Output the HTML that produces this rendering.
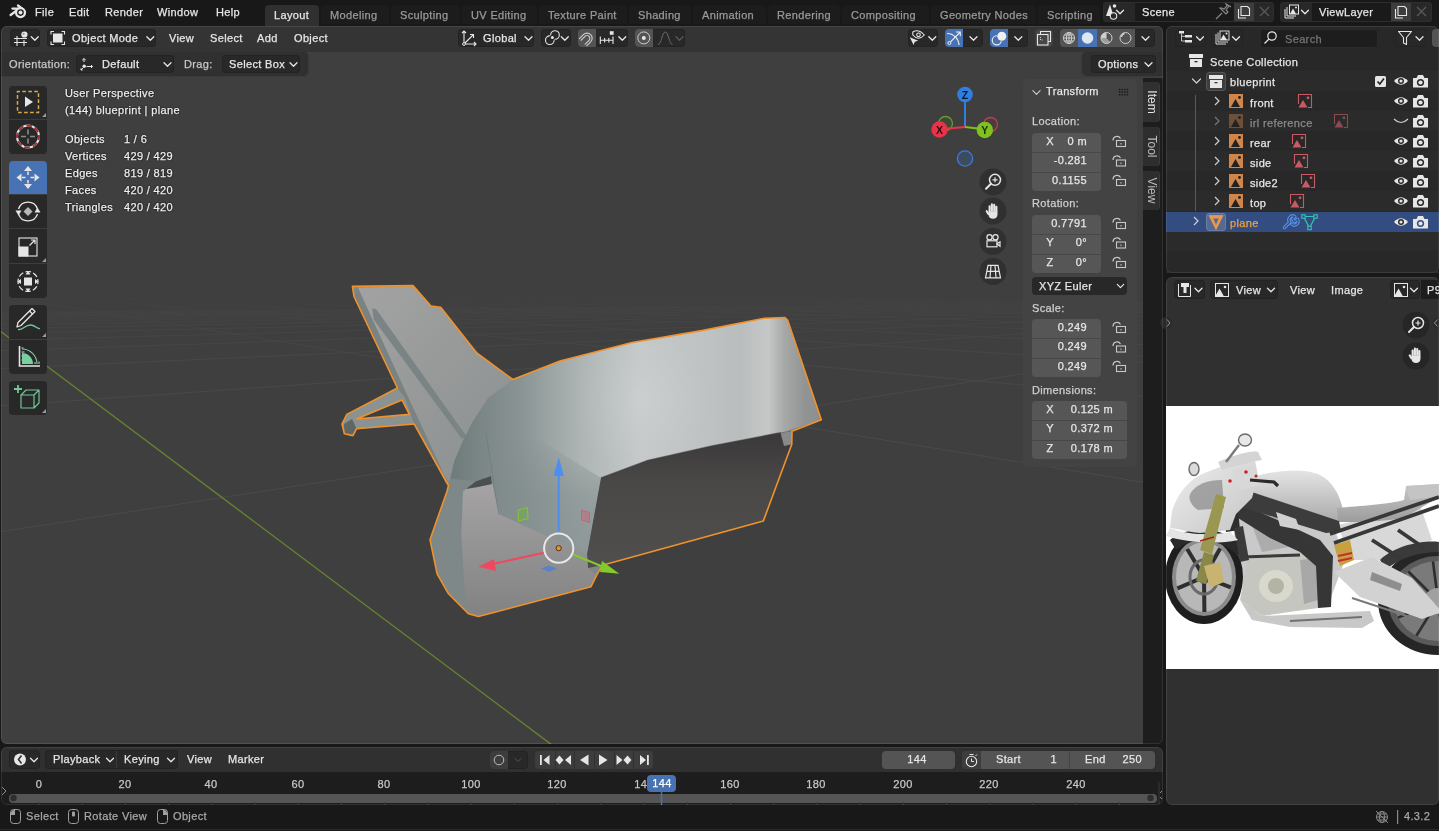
<!DOCTYPE html>
<html><head><meta charset="utf-8">
<style>
*{margin:0;padding:0;box-sizing:border-box}
html,body{width:1439px;height:831px;overflow:hidden;background:#181818;font-family:"Liberation Sans",sans-serif;font-size:12px;color:#e6e6e6;position:relative}
.a{position:absolute}
.t{position:absolute;white-space:nowrap;will-change:transform}
svg{position:absolute;overflow:visible}
</style></head><body>

<div class="a" style="left:0px;top:0px;width:1439px;height:26px;background:#181818;border-radius:0;"></div>
<svg style="left:0px;top:0px" width="32" height="24" viewBox="0 0 32 24"><g stroke="#e6e6e6" stroke-width="2.3" stroke-linecap="round" fill="none">
<path d="M12.4 8.6 L20 8.6"/><path d="M18 5.5 L22.5 9"/><path d="M10.6 15 L17 10.3"/></g>
<circle cx="20.5" cy="12.6" r="5.6" fill="#e6e6e6"/>
<circle cx="20.5" cy="12.6" r="3.3" fill="#181818"/>
<circle cx="20.5" cy="12.6" r="2" fill="#e6e6e6"/></svg>
<div class="t" style="left:35px;top:6px;color:#e6e6e6;font-size:11px;line-height:13px;letter-spacing:0.35px;-webkit-text-stroke:0.25px #e6e6e6;">File</div>
<div class="t" style="left:69px;top:6px;color:#e6e6e6;font-size:11px;line-height:13px;letter-spacing:0.35px;-webkit-text-stroke:0.25px #e6e6e6;">Edit</div>
<div class="t" style="left:105px;top:6px;color:#e6e6e6;font-size:11px;line-height:13px;letter-spacing:0.35px;-webkit-text-stroke:0.25px #e6e6e6;">Render</div>
<div class="t" style="left:157px;top:6px;color:#e6e6e6;font-size:11px;line-height:13px;letter-spacing:0.35px;-webkit-text-stroke:0.25px #e6e6e6;">Window</div>
<div class="t" style="left:216px;top:6px;color:#e6e6e6;font-size:11px;line-height:13px;letter-spacing:0.35px;-webkit-text-stroke:0.25px #e6e6e6;">Help</div>
<div class="a" style="left:265px;top:5px;width:54px;height:21px;background:#303030;border-radius:4px 4px 0 0;"></div>
<div class="t" style="left:274px;top:9px;color:#e6e6e6;font-size:11px;line-height:13px;letter-spacing:0.35px;-webkit-text-stroke:0.25px #e6e6e6;">Layout</div>
<div class="a" style="left:321px;top:5px;width:68px;height:19px;background:#1c1c1c;border-radius:4px 4px 0 0;"></div>
<div class="t" style="left:330px;top:9px;color:#9a9a9a;font-size:11px;line-height:13px;letter-spacing:0.35px;-webkit-text-stroke:0.25px #9a9a9a;">Modeling</div>
<div class="a" style="left:391px;top:5px;width:69px;height:19px;background:#1c1c1c;border-radius:4px 4px 0 0;"></div>
<div class="t" style="left:400px;top:9px;color:#9a9a9a;font-size:11px;line-height:13px;letter-spacing:0.35px;-webkit-text-stroke:0.25px #9a9a9a;">Sculpting</div>
<div class="a" style="left:462px;top:5px;width:75px;height:19px;background:#1c1c1c;border-radius:4px 4px 0 0;"></div>
<div class="t" style="left:471px;top:9px;color:#9a9a9a;font-size:11px;line-height:13px;letter-spacing:0.35px;-webkit-text-stroke:0.25px #9a9a9a;">UV Editing</div>
<div class="a" style="left:539px;top:5px;width:88px;height:19px;background:#1c1c1c;border-radius:4px 4px 0 0;"></div>
<div class="t" style="left:548px;top:9px;color:#9a9a9a;font-size:11px;line-height:13px;letter-spacing:0.35px;-webkit-text-stroke:0.25px #9a9a9a;">Texture Paint</div>
<div class="a" style="left:629px;top:5px;width:62px;height:19px;background:#1c1c1c;border-radius:4px 4px 0 0;"></div>
<div class="t" style="left:638px;top:9px;color:#9a9a9a;font-size:11px;line-height:13px;letter-spacing:0.35px;-webkit-text-stroke:0.25px #9a9a9a;">Shading</div>
<div class="a" style="left:693px;top:5px;width:73px;height:19px;background:#1c1c1c;border-radius:4px 4px 0 0;"></div>
<div class="t" style="left:702px;top:9px;color:#9a9a9a;font-size:11px;line-height:13px;letter-spacing:0.35px;-webkit-text-stroke:0.25px #9a9a9a;">Animation</div>
<div class="a" style="left:768px;top:5px;width:72px;height:19px;background:#1c1c1c;border-radius:4px 4px 0 0;"></div>
<div class="t" style="left:777px;top:9px;color:#9a9a9a;font-size:11px;line-height:13px;letter-spacing:0.35px;-webkit-text-stroke:0.25px #9a9a9a;">Rendering</div>
<div class="a" style="left:842px;top:5px;width:87px;height:19px;background:#1c1c1c;border-radius:4px 4px 0 0;"></div>
<div class="t" style="left:851px;top:9px;color:#9a9a9a;font-size:11px;line-height:13px;letter-spacing:0.35px;-webkit-text-stroke:0.25px #9a9a9a;">Compositing</div>
<div class="a" style="left:931px;top:5px;width:105px;height:19px;background:#1c1c1c;border-radius:4px 4px 0 0;"></div>
<div class="t" style="left:940px;top:9px;color:#9a9a9a;font-size:11px;line-height:13px;letter-spacing:0.35px;-webkit-text-stroke:0.25px #9a9a9a;">Geometry Nodes</div>
<div class="a" style="left:1038px;top:5px;width:62px;height:19px;background:#1c1c1c;border-radius:4px 4px 0 0;"></div>
<div class="t" style="left:1047px;top:9px;color:#9a9a9a;font-size:11px;line-height:13px;letter-spacing:0.35px;-webkit-text-stroke:0.25px #9a9a9a;">Scripting</div>
<div class="a" style="left:1px;top:26px;width:1162px;height:718px;background:#3f3f3f;border-radius:6px;box-shadow:inset 0 0 0 1px #4a4a4a22"></div>
<div class="a" style="left:1px;top:26px;width:1162px;height:26px;background:#343434;border-radius:6px 6px 0 0;"></div>
<div class="a" style="left:1px;top:52px;width:308px;height:25px;background:#303030;border-radius:0 5px 5px 0;box-shadow:inset -1px -1px 0 rgba(255,255,255,0.05)"></div>
<div class="a" style="left:1166px;top:26px;width:273px;height:247px;background:#282828;border-radius:6px;"></div>
<div class="a" style="left:1166px;top:26px;width:273px;height:25px;background:#282828;border-radius:6px 6px 0 0;"></div>
<div class="a" style="left:1166px;top:277px;width:273px;height:528px;background:#303030;border-radius:6px;"></div>
<div class="a" style="left:1166px;top:406px;width:273px;height:263px;background:#ffffff;border-radius:0;"></div>
<div class="a" style="left:1px;top:747px;width:1162px;height:58px;background:#1d1d1d;border-radius:6px;"></div>
<div class="a" style="left:1px;top:747px;width:1162px;height:25px;background:#303030;border-radius:6px 6px 0 0;"></div>
<div class="a" style="left:0px;top:805px;width:1439px;height:26px;background:#181818;border-radius:0;"></div>
<div class="a" style="left:1103px;top:2px;width:171px;height:20px;background:#282828;border-radius:4px;box-shadow:inset 0 0 0 1px #2e2e2e"></div>
<div class="a" style="left:1135px;top:3px;width:99px;height:18px;background:#1a1a1a;border-radius:0;"></div>
<div class="a" style="left:1234px;top:3px;width:20px;height:18px;background:#3d3d3d;border-radius:0;"></div>
<div class="t" style="left:1142px;top:6px;color:#e6e6e6;font-size:11px;line-height:13px;letter-spacing:0.35px;-webkit-text-stroke:0.25px #e6e6e6;">Scene</div>
<svg style="left:0px;top:0px" width="1439" height="831" viewBox="0 0 1439 831"><path d="M1116.5 10.25 L1120 13.75 L1123.5 10.25" stroke="#e6e6e6" stroke-width="1.3" fill="none" stroke-linecap="round" stroke-linejoin="round"/><path d="M1110 4.5 L1106 16 L1113.5 16 Z" fill="#e6e6e6"/><circle cx="1114.5" cy="6" r="1.8" fill="#e6e6e6"/><circle cx="1113.5" cy="16" r="3.2" fill="#282828" stroke="#e6e6e6" stroke-width="1.1"/><g stroke="#8a8a8a" stroke-width="1.1" fill="none"><path d="M1216 19 L1222 13"/><path d="M1220 8 L1226 14 L1228 12 L1226 10 L1229 6 L1231 7 L1226 4 L1227 6 L1224 9 L1222 8 Z"/></g><g stroke="#e6e6e6" stroke-width="1.1" fill="none"><path d="M1238.5 9 V18 H1246"/><path d="M1241 6.5 H1247.5 L1249.5 8.5 V15.5 H1241 Z"/></g><g stroke="#5c5c5c" stroke-width="1.1"><path d="M1260 7 L1269 16 M1269 7 L1260 16"/></g></svg>
<div class="a" style="left:1280px;top:2px;width:152px;height:20px;background:#282828;border-radius:4px;box-shadow:inset 0 0 0 1px #2e2e2e"></div>
<div class="a" style="left:1312px;top:3px;width:79px;height:18px;background:#1a1a1a;border-radius:0;"></div>
<div class="a" style="left:1391px;top:3px;width:20px;height:18px;background:#3d3d3d;border-radius:0;"></div>
<div class="t" style="left:1319px;top:6px;color:#e6e6e6;font-size:11px;line-height:13px;letter-spacing:0.35px;-webkit-text-stroke:0.25px #e6e6e6;">ViewLayer</div>
<svg style="left:0px;top:0px" width="1439" height="831" viewBox="0 0 1439 831"><path d="M1301.5 10.25 L1305 13.75 L1308.5 10.25" stroke="#e6e6e6" stroke-width="1.3" fill="none" stroke-linecap="round" stroke-linejoin="round"/><g stroke="#e6e6e6" stroke-width="1" fill="none"><path d="M1285 9 V18 H1294"/><path d="M1287 7 V16 H1296"/><rect x="1289.5" y="5" width="9" height="9"/></g><path d="M1290 14 L1293 8.5 L1296 14 Z" fill="#e6e6e6"/><circle cx="1296" cy="7.5" r="1" fill="#e6e6e6"/><g stroke="#e6e6e6" stroke-width="1.1" fill="none"><path d="M1395.5 9 V18 H1403"/><path d="M1398 6.5 H1404.5 L1406.5 8.5 V15.5 H1398 Z"/></g><g stroke="#5c5c5c" stroke-width="1.1"><path d="M1417 7 L1426 16 M1426 7 L1417 16"/></g></svg>
<div class="a" style="left:10px;top:29px;width:30px;height:18px;background:#282828;border-radius:4px;box-shadow:inset 0 0 0 1px rgba(0,0,0,0.12)"></div>
<div class="a" style="left:47px;top:29px;width:109px;height:18px;background:#282828;border-radius:4px;box-shadow:inset 0 0 0 1px rgba(0,0,0,0.12)"></div>
<div class="t" style="left:72px;top:32px;color:#e6e6e6;font-size:11px;line-height:13px;letter-spacing:0.35px;-webkit-text-stroke:0.25px #e6e6e6;">Object Mode</div>
<div class="t" style="left:169px;top:32px;color:#e6e6e6;font-size:11px;line-height:13px;letter-spacing:0.35px;-webkit-text-stroke:0.25px #e6e6e6;">View</div>
<div class="t" style="left:210px;top:32px;color:#e6e6e6;font-size:11px;line-height:13px;letter-spacing:0.35px;-webkit-text-stroke:0.25px #e6e6e6;">Select</div>
<div class="t" style="left:257px;top:32px;color:#e6e6e6;font-size:11px;line-height:13px;letter-spacing:0.35px;-webkit-text-stroke:0.25px #e6e6e6;">Add</div>
<div class="t" style="left:294px;top:32px;color:#e6e6e6;font-size:11px;line-height:13px;letter-spacing:0.35px;-webkit-text-stroke:0.25px #e6e6e6;">Object</div>
<div class="a" style="left:458px;top:29px;width:76px;height:18px;background:#282828;border-radius:4px;box-shadow:inset 0 0 0 1px rgba(0,0,0,0.12)"></div>
<div class="t" style="left:483px;top:32px;color:#e6e6e6;font-size:11px;line-height:13px;letter-spacing:0.35px;-webkit-text-stroke:0.25px #e6e6e6;">Global</div>
<div class="a" style="left:541px;top:29px;width:30px;height:18px;background:#282828;border-radius:4px;box-shadow:inset 0 0 0 1px rgba(0,0,0,0.12)"></div>
<div class="a" style="left:578px;top:29px;width:50px;height:18px;background:#282828;border-radius:4px;box-shadow:inset 0 0 0 1px rgba(0,0,0,0.12)"></div>
<div class="a" style="left:578px;top:29px;width:18px;height:18px;background:#545454;border-radius:4px 0 0 4px;"></div>
<div class="a" style="left:635px;top:29px;width:50px;height:18px;background:#282828;border-radius:4px;box-shadow:inset 0 0 0 1px rgba(0,0,0,0.12)"></div>
<div class="a" style="left:635px;top:29px;width:18px;height:18px;background:#545454;border-radius:4px 0 0 4px;"></div>
<div class="a" style="left:908px;top:29px;width:30px;height:18px;background:#282828;border-radius:4px;box-shadow:inset 0 0 0 1px rgba(0,0,0,0.12)"></div>
<div class="a" style="left:945px;top:29px;width:38px;height:18px;background:#282828;border-radius:4px;box-shadow:inset 0 0 0 1px rgba(0,0,0,0.12)"></div>
<div class="a" style="left:945px;top:29px;width:18px;height:18px;background:#4772b3;border-radius:4px 0 0 4px;"></div>
<div class="a" style="left:990px;top:29px;width:38px;height:18px;background:#282828;border-radius:4px;box-shadow:inset 0 0 0 1px rgba(0,0,0,0.12)"></div>
<div class="a" style="left:990px;top:29px;width:18px;height:18px;background:#4772b3;border-radius:4px 0 0 4px;"></div>
<div class="a" style="left:1035px;top:29px;width:18px;height:18px;background:#474747;border-radius:4px;box-shadow:inset 0 0 0 1px rgba(0,0,0,0.12)"></div>
<div class="a" style="left:1060px;top:29px;width:95px;height:18px;background:#282828;border-radius:4px;box-shadow:inset 0 0 0 1px rgba(0,0,0,0.12)"></div>
<div class="a" style="left:1060px;top:29px;width:18px;height:18px;background:#545454;border-radius:4px 0 0 4px;"></div>
<div class="a" style="left:1078px;top:29px;width:19px;height:18px;background:#4772b3;border-radius:0;"></div>
<div class="a" style="left:1097px;top:29px;width:19px;height:18px;background:#545454;border-radius:0;"></div>
<div class="a" style="left:1116px;top:29px;width:19px;height:18px;background:#545454;border-radius:0;"></div>
<div class="t" style="left:9px;top:58px;color:#c8c8c8;font-size:11px;line-height:13px;letter-spacing:0.35px;-webkit-text-stroke:0.25px #c8c8c8;">Orientation:</div>
<div class="a" style="left:76px;top:55px;width:98px;height:18px;background:#282828;border-radius:4px;box-shadow:inset 0 0 0 1px rgba(0,0,0,0.12)"></div>
<div class="t" style="left:102px;top:58px;color:#e6e6e6;font-size:11px;line-height:13px;letter-spacing:0.35px;-webkit-text-stroke:0.25px #e6e6e6;">Default</div>
<div class="t" style="left:184px;top:58px;color:#c8c8c8;font-size:11px;line-height:13px;letter-spacing:0.35px;-webkit-text-stroke:0.25px #c8c8c8;">Drag:</div>
<div class="a" style="left:222px;top:55px;width:78px;height:18px;background:#282828;border-radius:4px;box-shadow:inset 0 0 0 1px rgba(0,0,0,0.12)"></div>
<div class="t" style="left:229px;top:58px;color:#e6e6e6;font-size:11px;line-height:13px;letter-spacing:0.35px;-webkit-text-stroke:0.25px #e6e6e6;">Select Box</div>
<div class="a" style="left:1081px;top:52px;width:82px;height:25px;background:#303030;border-radius:5px 0 0 5px;box-shadow:inset 1px -1px 0 rgba(255,255,255,0.05)"></div>
<div class="a" style="left:1091px;top:55px;width:65px;height:18px;background:#282828;border-radius:4px;box-shadow:inset 0 0 0 1px rgba(0,0,0,0.12)"></div>
<div class="t" style="left:1098px;top:58px;color:#e6e6e6;font-size:11px;line-height:13px;letter-spacing:0.35px;-webkit-text-stroke:0.25px #e6e6e6;">Options</div>
<svg style="left:0px;top:0px" width="1439" height="831" viewBox="0 0 1439 831"><g stroke="#e6e6e6" stroke-width="1.1" fill="none"><path d="M14 38.5 H27 M14 42.5 H27 M17 36 V46 M24 40 V46"/></g><circle cx="24.4" cy="34.5" r="3.1" fill="#e6e6e6"/><circle cx="23.6" cy="33.8" r="1.1" fill="#9a9a9a"/><path d="M31.299999999999997 36.75 L34.8 40.25 L38.3 36.75" stroke="#e6e6e6" stroke-width="1.3" fill="none" stroke-linecap="round" stroke-linejoin="round"/><g stroke="#e6e6e6" stroke-width="1.1" fill="none"><path d="M51 34.5 V31.5 H54 M61.5 31.5 H64.5 V34.5 M64.5 41.5 V44.5 H61.5 M54 44.5 H51 V41.5"/></g><rect x="53" y="33.5" width="9.5" height="9" fill="#e6e6e6"/><path d="M146.8 36.75 L150.3 40.25 L153.8 36.75" stroke="#e6e6e6" stroke-width="1.3" fill="none" stroke-linecap="round" stroke-linejoin="round"/><g stroke="#e6e6e6" stroke-width="1.1" fill="none"><path d="M464 31 V44 H476 M462 33 L464 31 L466 33 M474 42 L476 44 L474 46 M464 44 L473.5 34.5 M470 34.5 H473.5 V38"/></g><circle cx="464" cy="44" r="1.4" fill="#282828" stroke="#e6e6e6" stroke-width="1"/><path d="M525.0 36.75 L528.5 40.25 L532.0 36.75" stroke="#e6e6e6" stroke-width="1.3" fill="none" stroke-linecap="round" stroke-linejoin="round"/><g stroke="#e6e6e6" stroke-width="1.1" fill="none"><circle cx="549.8" cy="40.2" r="4.3"/><circle cx="555" cy="35" r="4.3"/></g><circle cx="552.4" cy="37.6" r="2.8" fill="#282828"/><circle cx="552.4" cy="37.6" r="1.5" fill="#e6e6e6"/><path d="M561.3 36.75 L564.8 40.25 L568.3 36.75" stroke="#e6e6e6" stroke-width="1.3" fill="none" stroke-linecap="round" stroke-linejoin="round"/><g transform="translate(587 38.3) rotate(45)"><path d="M-4 6 V0 A4 4 0 0 1 4 0 V6" stroke="#cfcfcf" stroke-width="3.4" fill="none"/><path d="M-4 6.5 V0 A4 4 0 0 1 4 0 V6.5" stroke="#545454" stroke-width="1.2" fill="none"/></g><g stroke="#e6e6e6" stroke-width="1.1" fill="none"><path d="M600 40.2 H613 M600.3 36.5 V44 M604.6 38 V42.5 M608.8 38 V42.5 M613 36.5 V44"/></g><rect x="609.8" y="31.2" width="3.8" height="3.6" fill="#e6e6e6"/><path d="M618.8 36.75 L622.3 40.25 L625.8 36.75" stroke="#e6e6e6" stroke-width="1.3" fill="none" stroke-linecap="round" stroke-linejoin="round"/><circle cx="643.8" cy="37.9" r="6" fill="none" stroke="#cfcfcf" stroke-width="1"/><circle cx="643.8" cy="37.9" r="2" fill="#e6e6e6"/><path d="M657.9 44.5 C661.5 44.5 662 32 665.3 32 C668.6 32 669 44.5 672.5 44.5" stroke="#6a6a6a" stroke-width="1" fill="none"/><path d="M676.0 36.75 L679.5 40.25 L683.0 36.75" stroke="#5a5a5a" stroke-width="1.3" fill="none" stroke-linecap="round" stroke-linejoin="round"/><path d="M912.8 32 Q918.5 28.5 924.3 35 Q918.5 41.5 912.8 35 Z" fill="none" stroke="#e6e6e6" stroke-width="1.1"/><circle cx="918.5" cy="34.8" r="1.8" fill="none" stroke="#e6e6e6" stroke-width="1.1"/><path d="M909.8 37.2 L918.2 40.8 L914.8 41.8 L913.6 45 Z" fill="#e6e6e6"/><path d="M928.8 36.75 L932.3 40.25 L935.8 36.75" stroke="#e6e6e6" stroke-width="1.3" fill="none" stroke-linecap="round" stroke-linejoin="round"/><path d="M947 33.5 A12 12 0 0 1 959 45" stroke="#f0f0f0" stroke-width="1.1" fill="none"/><circle cx="949.4" cy="43" r="1.5" fill="none" stroke="#f0f0f0" stroke-width="1"/><path d="M950.5 41.8 L960.3 32 M956 32 H960.3 V36.3" stroke="#f0f0f0" stroke-width="1.1" fill="none"/><path d="M970.0 36.75 L973.5 40.25 L977.0 36.75" stroke="#e6e6e6" stroke-width="1.3" fill="none" stroke-linecap="round" stroke-linejoin="round"/><circle cx="996.8" cy="40.3" r="4.6" fill="none" stroke="#f0f0f0" stroke-width="1.1"/><circle cx="1001.8" cy="36.3" r="5" fill="#4772b3"/><circle cx="1001.8" cy="36.3" r="4.5" fill="#f0f0f0"/><path d="M1014.8 36.75 L1018.3 40.25 L1021.8 36.75" stroke="#e6e6e6" stroke-width="1.3" fill="none" stroke-linecap="round" stroke-linejoin="round"/><g stroke="#e6e6e6" stroke-width="1.1" fill="none"><path d="M1040.5 34 V31.5 H1050.5 V41.5 H1048"/><rect x="1037.5" y="34.5" width="10.5" height="10.5"/></g><path d="M1040.5 37 V40 H1043.5" stroke="#e6e6e6" stroke-width="0.9" stroke-dasharray="1 1" fill="none"/><g stroke="#cfcfcf" stroke-width="1" fill="none"><circle cx="1069" cy="38" r="5.5"/><path d="M1063.5 38 H1074.5 M1064.5 35 H1073.5 M1064.5 41 H1073.5 M1069 32.5 V43.5"/><ellipse cx="1069" cy="38" rx="2.6" ry="5.5"/></g><circle cx="1087.5" cy="38" r="5.8" fill="#dde6f5"/><circle cx="1106.5" cy="38" r="5.5" fill="none" stroke="#cfcfcf" stroke-width="1"/><path d="M1106.5 38 V32.5 A5.5 5.5 0 0 0 1101 38 Z" fill="#cfcfcf"/><path d="M1106.5 38 L1110.2 42 A5.5 5.5 0 0 1 1101 38 Z" fill="#cfcfcf" opacity="0.6"/><circle cx="1125.5" cy="38" r="5.5" fill="none" stroke="#cfcfcf" stroke-width="1"/><path d="M1121.5 37 A4 4 0 0 1 1124.5 33.5" stroke="#cfcfcf" stroke-width="1.3" fill="none"/><path d="M1142.0 36.75 L1145.5 40.25 L1149.0 36.75" stroke="#e6e6e6" stroke-width="1.3" fill="none" stroke-linecap="round" stroke-linejoin="round"/><g stroke="#e6e6e6" stroke-width="1" fill="none"><path d="M84 58.5 V62 M82.3 60.2 L84 58.5 L85.7 60.2 M86.5 66.5 H92.5 M91 65 L92.5 66.5 L91 68 M83 68 L81 70 M81 68.3 V70 H82.7"/></g><circle cx="84.2" cy="66.3" r="1.7" fill="#e6e6e6"/><path d="M164.0 62.75 L167.5 66.25 L171.0 62.75" stroke="#e6e6e6" stroke-width="1.3" fill="none" stroke-linecap="round" stroke-linejoin="round"/><path d="M290.0 62.75 L293.5 66.25 L297.0 62.75" stroke="#e6e6e6" stroke-width="1.3" fill="none" stroke-linecap="round" stroke-linejoin="round"/><path d="M1145.0 62.75 L1148.5 66.25 L1152.0 62.75" stroke="#e6e6e6" stroke-width="1.3" fill="none" stroke-linecap="round" stroke-linejoin="round"/></svg>
<svg style="left:0px;top:0px" width="1439" height="831" viewBox="0 0 1439 831"><defs><clipPath id="vpclip"><rect x="1" y="51" width="1142" height="693"/></clipPath><linearGradient id="gridfade" x1="0" y1="0" x2="0" y2="1"><stop offset="0" stop-color="#fff" stop-opacity="0"/><stop offset="0.04" stop-color="#fff" stop-opacity="0.3"/><stop offset="0.16" stop-color="#fff" stop-opacity="0.85"/><stop offset="0.3" stop-color="#fff" stop-opacity="1"/></linearGradient><mask id="gm" maskUnits="userSpaceOnUse" x="0" y="250" width="1160" height="500"><rect x="0" y="288" width="1160" height="462" fill="url(#gridfade)"/></mask></defs><g clip-path="url(#vpclip)"><g mask="url(#gm)" stroke="#4a4a4a" stroke-width="1"><line x1="1500" y1="300" x2="-10" y2="533.4"/><line x1="1500" y1="300" x2="-10" y2="406.6"/><line x1="1500" y1="300" x2="-10" y2="369.0"/><line x1="1500" y1="300" x2="-10" y2="351.1"/><line x1="1500" y1="300" x2="-10" y2="340.5"/><line x1="1500" y1="300" x2="-10" y2="333.6"/><line x1="1500" y1="300" x2="-10" y2="328.7"/><line x1="1500" y1="300" x2="-10" y2="325.0"/><line x1="1500" y1="300" x2="-10" y2="322.2"/><line x1="1500" y1="300" x2="-10" y2="319.9"/><line x1="1500" y1="300" x2="-10" y2="318.1"/><line x1="1500" y1="300" x2="-10" y2="316.6"/><line x1="1500" y1="300" x2="-10" y2="315.3"/><line x1="1500" y1="300" x2="-10" y2="314.2"/><line x1="1500" y1="300" x2="-10" y2="313.2"/><line x1="1500" y1="300" x2="-10" y2="312.4"/><line x1="-60" y1="286" x2="1200" y2="491.5"/><line x1="-60" y1="286" x2="1200" y2="401.3"/><line x1="-60" y1="286" x2="1200" y2="366.1"/><line x1="-60" y1="286" x2="1200" y2="347.4"/><line x1="-60" y1="286" x2="1200" y2="335.7"/><line x1="-60" y1="286" x2="1200" y2="327.8"/><line x1="-60" y1="286" x2="1200" y2="322.1"/><line x1="-60" y1="286" x2="1200" y2="317.7"/><line x1="-60" y1="286" x2="1200" y2="314.3"/><line x1="-60" y1="286" x2="1200" y2="311.5"/><line x1="-60" y1="286" x2="1200" y2="309.3"/><line x1="-60" y1="286" x2="1200" y2="307.4"/><line x1="-60" y1="286" x2="1200" y2="305.8"/><line x1="-60" y1="286" x2="1200" y2="304.4"/><line x1="-60" y1="286" x2="1200" y2="303.2"/></g><line x1="-60" y1="286" x2="600" y2="781" stroke="#66892e" stroke-width="1.3"/></g></svg>
<svg style="left:0px;top:0px" width="1439" height="831" viewBox="0 0 1439 831"><defs><linearGradient id="tubeg" x1="450" y1="0" x2="822" y2="0" gradientUnits="userSpaceOnUse"><stop offset="0" stop-color="#6f7a7a"/><stop offset="0.19" stop-color="#8a9494"/><stop offset="0.35" stop-color="#aeb4b4"/><stop offset="0.51" stop-color="#c4c8c8"/><stop offset="0.67" stop-color="#c0c3c3"/><stop offset="0.78" stop-color="#babdbd"/><stop offset="0.855" stop-color="#c6c8c8"/><stop offset="0.9" stop-color="#a6a8a8"/><stop offset="0.955" stop-color="#929494"/><stop offset="1" stop-color="#8c8e8e"/></linearGradient><linearGradient id="colg2" x1="0" y1="430" x2="0" y2="560" gradientUnits="userSpaceOnUse"><stop offset="0" stop-color="#7f8a8a" stop-opacity="0"/><stop offset="0.5" stop-color="#7f8a8a" stop-opacity="0.55"/><stop offset="1" stop-color="#859090" stop-opacity="0.8"/></linearGradient><linearGradient id="colg" x1="450" y1="0" x2="605" y2="0" gradientUnits="userSpaceOnUse"><stop offset="0" stop-color="#6f7a7a"/><stop offset="0.4" stop-color="#7f8a8a"/><stop offset="1" stop-color="#929a9a"/></linearGradient><linearGradient id="boxg" x1="0" y1="440" x2="0" y2="560" gradientUnits="userSpaceOnUse"><stop offset="0" stop-color="#3c3a3a"/><stop offset="0.35" stop-color="#4a4747"/><stop offset="1" stop-color="#504d4d"/></linearGradient><radialGradient id="hil" cx="640" cy="400" r="70" gradientUnits="userSpaceOnUse"><stop offset="0" stop-color="#ffffff" stop-opacity="0.12"/><stop offset="1" stop-color="#ffffff" stop-opacity="0"/></radialGradient><linearGradient id="floorg" x1="0" y1="480" x2="0" y2="617" gradientUnits="userSpaceOnUse"><stop offset="0" stop-color="#a6a4a4"/><stop offset="1" stop-color="#828282"/></linearGradient><linearGradient id="fing" x1="360" y1="290" x2="510" y2="440" gradientUnits="userSpaceOnUse"><stop offset="0" stop-color="#a2a2a2"/><stop offset="1" stop-color="#8e9292"/></linearGradient></defs><path d="M352.4,286.4 413.0,285.6 431.0,306.0 440.7,307.3 476.8,353.0 512.9,379.5 560.0,361.0 632.0,342.5 703.0,330.4 764.5,318.2 784.9,317.5 787.8,320.4 821.3,419.7 792.0,431.3 791.8,444.2 763.3,521.1 602.3,565.3 596.6,575.3 591.0,586.7 478.4,616.6 468.4,613.7 448.5,593.8 437.1,573.8 430.0,539.7 447.0,491.2 448.5,485.5 414.2,424.0 356.5,428.8 352.9,435.6 344.4,433.7 342.0,424.0 346.8,414.4 397.4,388.0 354.0,296.5 Z M356.5,419.0 402.0,400.0 409.4,414.4 Z" fill="#7e8888" fill-rule="evenodd"/><polygon points="358.0,287.5 413.0,286.5 431.0,306.5 440.7,308.0 476.8,353.5 512.9,380.0 488.4,398.0 473.2,420.7 463.0,441.0 455.0,460.0 449.0,482.0 440.0,468.0" fill="url(#fing)"/><polygon points="354.0,296.5 357.5,288.0 442.0,470.0 447.5,486.0 414.2,424.0 397.4,388.0" fill="#7a8282"/><polygon points="372.0,308.5 376.0,309.0 467.0,437.0 462.0,439.0 374.0,320.0" fill="#7b8484"/><path d="M397.4,388.0 346.8,414.4 342.0,424.0 344.4,433.7 352.9,435.6 356.5,428.8 414.2,424.0 405.0,398.0 Z M356.5,419.0 402.0,400.0 409.4,414.4 Z" fill="#8a9292" fill-rule="evenodd"/><polygon points="344.0,424.0 352.0,419.0 356.5,428.8 352.9,435.6 344.4,433.7" fill="#5e6666"/><polygon points="512.9,379.5 560.0,361.0 632.0,342.5 703.0,330.4 764.5,318.2 784.9,317.5 787.8,320.4 821.3,419.7 780.5,432.8 712.0,446.0 647.7,460.5 601.0,478.0 587.0,554.5 498.5,514.0 491.0,476.0 475.8,481.3 450.5,478.8 454.3,461.0 463.0,441.0 473.2,420.7 488.4,398.0" fill="url(#tubeg)"/><polygon points="512.9,379.5 560.0,361.0 632.0,342.5 703.0,330.4 764.5,318.2 784.9,317.5 787.8,320.4 821.3,419.7 780.5,432.8 712.0,446.0 647.7,460.5 601.0,478.0 587.0,554.5 498.5,514.0 491.0,476.0 475.8,481.3 450.5,478.8 454.3,461.0 463.0,441.0 473.2,420.7 488.4,398.0" fill="url(#hil)"/><polygon points="485.9,433.3 540.0,440.0 601.0,478.0 587.0,554.5 498.5,514.0" fill="url(#colg2)"/><path d="M486 433 L498.5 514" stroke="#6a7474" stroke-width="1" opacity="0.5"/><polygon points="601.0,478.0 647.7,460.5 712.0,446.0 780.5,432.8 792.0,431.3 791.8,444.2 763.3,521.1 602.3,565.3 588.0,568.0 587.0,554.5" fill="url(#boxg)"/><polygon points="780.5,432.8 792.0,431.3 791.8,444.2 784.0,446.0" fill="#8a8a8a"/><path d="M601 478 L647.7 460.5 L712 446 L780.5 432.8" stroke="#3a3a3a" stroke-width="1.5" fill="none" opacity="0.6"/><polygon points="463.0,491.4 475.8,481.3 491.0,476.0 498.5,514.0 587.0,554.5 588.0,568.0 596.6,575.3 591.0,586.7 478.4,616.6 465.6,605.0 461.3,534.0" fill="url(#floorg)"/><polygon points="466.0,489.0 475.8,481.3 491.0,476.0 492.0,484.0 478.0,487.0" fill="#4a4f4f"/><path d="M352.4,286.4 413.0,285.6 431.0,306.0 440.7,307.3 476.8,353.0 512.9,379.5 560.0,361.0 632.0,342.5 703.0,330.4 764.5,318.2 784.9,317.5 787.8,320.4 821.3,419.7 792.0,431.3 791.8,444.2 763.3,521.1 602.3,565.3 596.6,575.3 591.0,586.7 478.4,616.6 468.4,613.7 448.5,593.8 437.1,573.8 430.0,539.7 447.0,491.2 448.5,485.5 414.2,424.0 356.5,428.8 352.9,435.6 344.4,433.7 342.0,424.0 346.8,414.4 397.4,388.0 354.0,296.5 Z M356.5,419.0 402.0,400.0 409.4,414.4 Z" fill="none" stroke="#f0922c" stroke-width="1.6" stroke-linejoin="round"/><line x1="558.7" y1="532" x2="558.7" y2="470" stroke="#4d8ff0" stroke-width="2"/><path d="M553.5 476 L558.7 457 L563.9 476 Z" fill="#4d8ff0"/><line x1="545" y1="552.5" x2="488" y2="565" stroke="#f0485e" stroke-width="2"/><path d="M478.4 566.7 L494 559 L496 571 Z" fill="#f0485e"/><line x1="572" y1="554" x2="606" y2="568" stroke="#82c92a" stroke-width="2"/><path d="M602 561 L619.4 573.8 L600 572 Z" fill="#82c92a"/><polygon points="518,510 527.5,507.5 528,518.5 518.5,521" fill="#70b43a" fill-opacity="0.45" stroke="#82c92a" stroke-width="1"/><polygon points="581.5,510 589.5,512.5 589.5,522.5 581.5,520" fill="#e0506a" fill-opacity="0.35" stroke="#e0506a" stroke-width="1" stroke-opacity="0.7"/><polygon points="541,568.5 549,565.5 557,568.5 549,572" fill="#4d7fd0" fill-opacity="0.8"/><circle cx="558.7" cy="548.2" r="14.6" fill="none" stroke="#e8e8e8" stroke-width="2"/><circle cx="558.7" cy="548.2" r="2.6" fill="#f0922c" stroke="#222" stroke-width="0.8"/></svg>
<div class="a" style="left:9px;top:86px;width:38px;height:68px;background:#282828;border-radius:4px;"></div>
<div class="a" style="left:9px;top:119px;width:38px;height:1px;background:#3d3d3d;border-radius:0;"></div>
<div class="a" style="left:9px;top:161px;width:38px;height:33px;background:#4772b3;border-radius:4px 4px 0 0;"></div>
<div class="a" style="left:9px;top:194px;width:38px;height:104px;background:#282828;border-radius:0 0 4px 4px;"></div>
<div class="a" style="left:9px;top:194px;width:38px;height:1px;background:#3d3d3d;border-radius:0;"></div>
<div class="a" style="left:9px;top:228px;width:38px;height:1px;background:#3d3d3d;border-radius:0;"></div>
<div class="a" style="left:9px;top:263px;width:38px;height:1px;background:#3d3d3d;border-radius:0;"></div>
<div class="a" style="left:9px;top:161px;width:38px;height:137px;background:transparent;border-radius:4px;box-shadow:0 0 0 0 transparent"></div>
<div class="a" style="left:9px;top:305px;width:38px;height:69px;background:#282828;border-radius:4px;"></div>
<div class="a" style="left:9px;top:339px;width:38px;height:1px;background:#3d3d3d;border-radius:0;"></div>
<div class="a" style="left:9px;top:381px;width:38px;height:34px;background:#282828;border-radius:4px;"></div>
<svg style="left:0px;top:0px" width="1439" height="831" viewBox="0 0 1439 831"><g transform="translate(28 102)"><rect x="-10.5" y="-10.5" width="21" height="21" fill="none" stroke="#d8a84c" stroke-width="1.5" stroke-dasharray="3.6 2.4" stroke-dashoffset="1.2"/><path d="M-3 -5.5 L-3 5 L5 0 Z" fill="#e6e6e6"/></g><path d="M46 117 L46 113 L42 117 Z" fill="#9a9a9a"/><g transform="translate(28 136.5)"><circle r="11" fill="none" stroke="#e6e6e6" stroke-width="2"/><circle r="11" fill="none" stroke="#9c2e34" stroke-width="2" stroke-dasharray="5.6 3.04" stroke-dashoffset="2"/><path d="M0 -7 V-2 M0 2 V7 M-7 0 H-2 M2 0 H7" stroke="#8a8a8a" stroke-width="1.6"/></g><g transform="translate(28 177.5)"><g fill="#e6e6e6"><path d="M0 -11.5 L-4 -6.5 H4 Z M0 11.5 L-4 6.5 H4 Z M-11.5 0 L-6.5 -4 V4 Z M11.5 0 L6.5 -4 V4 Z"/></g><path d="M0 -6 V-2.5 M0 2.5 V6 M-6 0 H-2.5 M2.5 0 H6" stroke="#e6e6e6" stroke-width="1.5"/></g><g transform="translate(28 211.5)"><path d="M-9.5 -2.5 A10 10 0 0 1 9.5 -2.5 M9.5 2.5 A10 10 0 0 1 -9.5 2.5" stroke="#e6e6e6" stroke-width="1.3" fill="none"/><path d="M-12.5 -1 H-6.5 L-9.5 4 Z M12.5 1 H6.5 L9.5 -4 Z" fill="#e6e6e6"/><path d="M0 -4.5 L4.5 0 L0 4.5 L-4.5 0 Z" fill="#b8b8b8"/></g><g transform="translate(28 247)"><rect x="-9" y="-9" width="18" height="18" fill="none" stroke="#e6e6e6" stroke-width="1.1"/><rect x="-9.5" y="-0.5" width="10" height="10" fill="#e6e6e6"/><path d="M1.5 -1.5 L7 -7 M3 -7 H7 V-3" stroke="#e6e6e6" stroke-width="1.2" fill="none"/></g><path d="M46 262 L46 258 L42 262 Z" fill="#9a9a9a"/><g transform="translate(28 281.5)"><circle r="10" fill="none" stroke="#e6e6e6" stroke-width="1.2" stroke-dasharray="5.5 2.35" stroke-dashoffset="2.8"/><rect x="-4" y="-4" width="8" height="8" fill="#e6e6e6"/><path d="M0 -10.5 L-2.5 -7 H2.5 Z M0 10.5 L-2.5 7 H2.5 Z M-10.5 0 L-7 -2.5 V2.5 Z M10.5 0 L7 -2.5 V2.5 Z" fill="#e6e6e6"/></g><g transform="translate(28 321.5)"><path d="M-11 5.5 L-10 1 L4 -13 L7 -10 L-7 4 Z" fill="none" stroke="#e6e6e6" stroke-width="1.3" stroke-linejoin="round"/><path d="M1.5 -10.5 L4.5 -7.5" stroke="#e6e6e6" stroke-width="1.3"/><path d="M-10 8 C-5 9 -3 3 3 3.5 C8 4 9 8 12 7" stroke="#74c69a" stroke-width="1.4" fill="none"/></g><path d="M46 337 L46 333 L42 337 Z" fill="#9a9a9a"/><g transform="translate(28 357)"><path d="M-8.5 -11 V9 H12" stroke="#e6e6e6" stroke-width="1.6" fill="none"/><path d="M-6.5 -9 H-4.5 M-6.5 -5 H-3.5 M-6.5 -1 H-4.5 M-6.5 3 H-3.5 M-5 7 V4.5 M-1 7 V5 M3 7 V4.5 M7 7 V5 M11 7 V4.5" stroke="#e6e6e6" stroke-width="0.9"/><path d="M-6 -4 A11 11 0 0 1 5 7 H-6 Z" fill="#78d0a0"/><path d="M-6 -8 A15 15 0 0 1 9 7" stroke="#78d0a0" stroke-width="1.1" fill="none"/></g><g transform="translate(28 398)"><path d="M-10 -13 V-5 M-14 -9 H-6" stroke="#74c69a" stroke-width="1.8"/><g stroke="#74c69a" stroke-width="1.2" fill="none" stroke-linejoin="round"><path d="M-7 -3 L-2 -8 H11 V5 L6 10 H-7 Z M-7 -3 H6 V10 M6 -3 L11 -8"/></g></g><path d="M46 413 L46 409 L42 413 Z" fill="#9a9a9a"/></svg>
<div class="t" style="left:65px;top:87px;color:#f0f0f0;font-size:11px;line-height:13px;letter-spacing:0.35px;-webkit-text-stroke:0.25px #f0f0f0;text-shadow:0 0 2px #000,0 0 1px #000">User Perspective</div>
<div class="t" style="left:65px;top:104px;color:#f0f0f0;font-size:11px;line-height:13px;letter-spacing:0.35px;-webkit-text-stroke:0.25px #f0f0f0;text-shadow:0 0 2px #000,0 0 1px #000">(144) blueprint | plane</div>
<div class="t" style="left:65px;top:133px;color:#f0f0f0;font-size:11px;line-height:13px;letter-spacing:0.35px;-webkit-text-stroke:0.25px #f0f0f0;text-shadow:0 0 2px #000,0 0 1px #000">Objects</div>
<div class="t" style="left:124px;top:133px;color:#f0f0f0;font-size:11px;line-height:13px;letter-spacing:0.35px;-webkit-text-stroke:0.25px #f0f0f0;text-shadow:0 0 2px #000,0 0 1px #000">1 / 6</div>
<div class="t" style="left:65px;top:150px;color:#f0f0f0;font-size:11px;line-height:13px;letter-spacing:0.35px;-webkit-text-stroke:0.25px #f0f0f0;text-shadow:0 0 2px #000,0 0 1px #000">Vertices</div>
<div class="t" style="left:124px;top:150px;color:#f0f0f0;font-size:11px;line-height:13px;letter-spacing:0.35px;-webkit-text-stroke:0.25px #f0f0f0;text-shadow:0 0 2px #000,0 0 1px #000">429 / 429</div>
<div class="t" style="left:65px;top:167px;color:#f0f0f0;font-size:11px;line-height:13px;letter-spacing:0.35px;-webkit-text-stroke:0.25px #f0f0f0;text-shadow:0 0 2px #000,0 0 1px #000">Edges</div>
<div class="t" style="left:124px;top:167px;color:#f0f0f0;font-size:11px;line-height:13px;letter-spacing:0.35px;-webkit-text-stroke:0.25px #f0f0f0;text-shadow:0 0 2px #000,0 0 1px #000">819 / 819</div>
<div class="t" style="left:65px;top:184px;color:#f0f0f0;font-size:11px;line-height:13px;letter-spacing:0.35px;-webkit-text-stroke:0.25px #f0f0f0;text-shadow:0 0 2px #000,0 0 1px #000">Faces</div>
<div class="t" style="left:124px;top:184px;color:#f0f0f0;font-size:11px;line-height:13px;letter-spacing:0.35px;-webkit-text-stroke:0.25px #f0f0f0;text-shadow:0 0 2px #000,0 0 1px #000">420 / 420</div>
<div class="t" style="left:65px;top:201px;color:#f0f0f0;font-size:11px;line-height:13px;letter-spacing:0.35px;-webkit-text-stroke:0.25px #f0f0f0;text-shadow:0 0 2px #000,0 0 1px #000">Triangles</div>
<div class="t" style="left:124px;top:201px;color:#f0f0f0;font-size:11px;line-height:13px;letter-spacing:0.35px;-webkit-text-stroke:0.25px #f0f0f0;text-shadow:0 0 2px #000,0 0 1px #000">420 / 420</div>
<svg style="left:0px;top:0px" width="1439" height="831" viewBox="0 0 1439 831"><circle cx="945.5" cy="123.5" r="7" fill="#404838" stroke="#6a9a2a" stroke-width="1.3"/><circle cx="990.5" cy="124.5" r="7" fill="#4a3c3e" stroke="#c0404e" stroke-width="1.3"/><line x1="965" y1="127" x2="965" y2="95" stroke="#2f7fe0" stroke-width="2"/><line x1="965" y1="127" x2="939.5" y2="129.2" stroke="#e8334a" stroke-width="2"/><line x1="965" y1="127" x2="984.2" y2="129.2" stroke="#7fc21f" stroke-width="2"/><circle cx="965" cy="158.5" r="7.6" fill="#3c4c60" stroke="#3b7ad8" stroke-width="1.4"/><circle cx="965" cy="94.5" r="7.8" fill="#2f7fe0"/><text x="965" y="98.6" font-size="10.5" font-weight="bold" text-anchor="middle" fill="#0d1a2e" font-family="Liberation Sans">Z</text><circle cx="939.5" cy="129.5" r="8.2" fill="#e8334a"/><text x="939.5" y="133.7" font-size="10.5" font-weight="bold" text-anchor="middle" fill="#2a0a10" font-family="Liberation Sans">X</text><circle cx="984.8" cy="130" r="8.2" fill="#7fc21f"/><text x="984.8" y="134.2" font-size="10.5" font-weight="bold" text-anchor="middle" fill="#1a2a05" font-family="Liberation Sans">Y</text><circle cx="993" cy="182" r="13.5" fill="#2e2e2e" fill-opacity="0.85"/><circle cx="993" cy="211" r="13.5" fill="#2e2e2e" fill-opacity="0.85"/><circle cx="993" cy="241.5" r="13.5" fill="#2e2e2e" fill-opacity="0.85"/><circle cx="993" cy="271.5" r="13.5" fill="#2e2e2e" fill-opacity="0.85"/><g transform="translate(0 0.8)"><circle cx="995" cy="179" r="5.5" fill="none" stroke="#e6e6e6" stroke-width="1.5"/><path d="M991 183 L986 188" stroke="#e6e6e6" stroke-width="2" stroke-linecap="round"/><path d="M995 176.5 V181.5 M992.5 179 H997.5" stroke="#e6e6e6" stroke-width="1.2"/></g><g transform="translate(0 0.8)"><g transform="translate(993 211)"><g stroke="#e6e6e6" stroke-width="2.1" stroke-linecap="round"><path d="M-3.4 -0.5 V-5.5 M-1.1 -1 V-7.5 M1.2 -1 V-7 M3.4 -0.5 V-5"/><path d="M-4.6 2.2 L-6.3 -0.6"/></g><path d="M-4.5 -0.5 H4.5 V2.5 C4.5 5.5 2.5 7 0 7 C-2.5 7 -4.5 5.5 -4.5 2.5 Z" fill="#e6e6e6"/></g></g><g transform="translate(0 0.8)"><g stroke="#e6e6e6" stroke-width="1.2" fill="none"><circle cx="989.5" cy="236.5" r="2.6"/><circle cx="995.5" cy="236.5" r="2.6"/><rect x="987" y="240" width="10" height="6"/><path d="M997 243 L1000 241 V245.5 Z"/></g></g><g transform="translate(0 0.8)"><g stroke="#e6e6e6" stroke-width="1.2" fill="none"><path d="M988 264.5 H998 L1000.5 277 H985.5 Z M986.6 270.5 H999.4 M991 264.5 L990 277 M995 264.5 L996 277"/></g></g></svg>
<div class="a" style="left:1023px;top:79px;width:114px;height:388px;background:#434343;border-radius:5px;"></div>
<div class="a" style="left:1143px;top:78px;width:20px;height:666px;background:#1d1d1d;border-radius:0 0 6px 0;"></div>
<div class="a" style="left:1143px;top:82px;width:17px;height:40px;background:#303030;border-radius:0 4px 4px 0;box-shadow:inset -1px 0 0 #3a3a3a"></div>
<div class="a" style="left:1143px;top:127px;width:17px;height:39px;background:#2e2e2e;border-radius:0 4px 4px 0;box-shadow:inset -1px 0 0 #3a3a3a"></div>
<div class="a" style="left:1143px;top:171px;width:17px;height:39px;background:#2e2e2e;border-radius:0 4px 4px 0;box-shadow:inset -1px 0 0 #3a3a3a"></div>
<svg style="left:0px;top:0px" width="1439" height="831" viewBox="0 0 1439 831"><text x="0" y="0" transform="translate(1147.5 102.0) rotate(90)" text-anchor="middle" font-size="12" fill="#e6e6e6" font-family="Liberation Sans">Item</text><text x="0" y="0" transform="translate(1147.5 146.5) rotate(90)" text-anchor="middle" font-size="12" fill="#bdbdbd" font-family="Liberation Sans">Tool</text><text x="0" y="0" transform="translate(1147.5 190.5) rotate(90)" text-anchor="middle" font-size="12" fill="#bdbdbd" font-family="Liberation Sans">View</text><path d="M1032.9 90.7 L1036.5 94.3 L1040.1 90.7" stroke="#cfcfcf" stroke-width="1.1" fill="none" stroke-linecap="round" stroke-linejoin="round"/><g fill="#1c1c1c"><rect x="1118.8" y="88.8" width="1.5" height="1.5"/><rect x="1118.8" y="91.4" width="1.5" height="1.5"/><rect x="1118.8" y="94.0" width="1.5" height="1.5"/><rect x="1121.4" y="88.8" width="1.5" height="1.5"/><rect x="1121.4" y="91.4" width="1.5" height="1.5"/><rect x="1121.4" y="94.0" width="1.5" height="1.5"/><rect x="1124.0" y="88.8" width="1.5" height="1.5"/><rect x="1124.0" y="91.4" width="1.5" height="1.5"/><rect x="1124.0" y="94.0" width="1.5" height="1.5"/><rect x="1126.6" y="88.8" width="1.5" height="1.5"/><rect x="1126.6" y="91.4" width="1.5" height="1.5"/><rect x="1126.6" y="94.0" width="1.5" height="1.5"/></g></svg>
<div class="t" style="left:1046px;top:85px;color:#e6e6e6;font-size:11px;line-height:13px;letter-spacing:0.35px;-webkit-text-stroke:0.25px #e6e6e6;">Transform</div>
<div class="t" style="left:1032px;top:115px;color:#d0d0d0;font-size:11px;line-height:13px;letter-spacing:0.35px;-webkit-text-stroke:0.25px #d0d0d0;">Location:</div>
<div class="a" style="left:1032px;top:133px;width:69px;height:58px;background:#565656;border-radius:4px;"></div>
<div class="t" style="left:950px;width:200px;text-align:center;top:135px;color:#e6e6e6;font-size:11px;line-height:13px;letter-spacing:0.35px;-webkit-text-stroke:0.25px #e6e6e6;">X</div>
<div class="t" style="left:887px;width:200px;text-align:right;top:135px;color:#e6e6e6;font-size:11px;line-height:13px;letter-spacing:0.35px;-webkit-text-stroke:0.25px #e6e6e6;">0 m</div>
<div class="a" style="left:1032px;top:152px;width:69px;height:1px;background:#474747;border-radius:0;"></div>
<div class="t" style="left:887px;width:200px;text-align:right;top:154px;color:#e6e6e6;font-size:11px;line-height:13px;letter-spacing:0.35px;-webkit-text-stroke:0.25px #e6e6e6;">-0.281</div>
<div class="a" style="left:1032px;top:172px;width:69px;height:1px;background:#474747;border-radius:0;"></div>
<div class="t" style="left:887px;width:200px;text-align:right;top:174px;color:#e6e6e6;font-size:11px;line-height:13px;letter-spacing:0.35px;-webkit-text-stroke:0.25px #e6e6e6;">0.1155</div>
<svg style="left:0px;top:0px" width="1439" height="831" viewBox="0 0 1439 831"><g stroke="#c8c8c8" stroke-width="1.1" fill="none"><path d="M1113 140.5 A4 4 0 0 1 1120.5 138.5"/><rect x="1116.5" y="140.5" width="9" height="6"/></g><rect x="1120.5" y="143.0" width="1" height="1.6" fill="#c8c8c8"/><g stroke="#c8c8c8" stroke-width="1.1" fill="none"><path d="M1113 160.0 A4 4 0 0 1 1120.5 158.0"/><rect x="1116.5" y="160.0" width="9" height="6"/></g><rect x="1120.5" y="162.5" width="1" height="1.6" fill="#c8c8c8"/><g stroke="#c8c8c8" stroke-width="1.1" fill="none"><path d="M1113 179.5 A4 4 0 0 1 1120.5 177.5"/><rect x="1116.5" y="179.5" width="9" height="6"/></g><rect x="1120.5" y="182.0" width="1" height="1.6" fill="#c8c8c8"/></svg>
<div class="t" style="left:1032px;top:197px;color:#d0d0d0;font-size:11px;line-height:13px;letter-spacing:0.35px;-webkit-text-stroke:0.25px #d0d0d0;">Rotation:</div>
<div class="a" style="left:1032px;top:215px;width:69px;height:58px;background:#565656;border-radius:4px;"></div>
<div class="t" style="left:887px;width:200px;text-align:right;top:217px;color:#e6e6e6;font-size:11px;line-height:13px;letter-spacing:0.35px;-webkit-text-stroke:0.25px #e6e6e6;">0.7791</div>
<div class="a" style="left:1032px;top:234px;width:69px;height:1px;background:#474747;border-radius:0;"></div>
<div class="t" style="left:950px;width:200px;text-align:center;top:236px;color:#e6e6e6;font-size:11px;line-height:13px;letter-spacing:0.35px;-webkit-text-stroke:0.25px #e6e6e6;">Y</div>
<div class="t" style="left:887px;width:200px;text-align:right;top:236px;color:#e6e6e6;font-size:11px;line-height:13px;letter-spacing:0.35px;-webkit-text-stroke:0.25px #e6e6e6;">0°</div>
<div class="a" style="left:1032px;top:254px;width:69px;height:1px;background:#474747;border-radius:0;"></div>
<div class="t" style="left:950px;width:200px;text-align:center;top:256px;color:#e6e6e6;font-size:11px;line-height:13px;letter-spacing:0.35px;-webkit-text-stroke:0.25px #e6e6e6;">Z</div>
<div class="t" style="left:887px;width:200px;text-align:right;top:256px;color:#e6e6e6;font-size:11px;line-height:13px;letter-spacing:0.35px;-webkit-text-stroke:0.25px #e6e6e6;">0°</div>
<svg style="left:0px;top:0px" width="1439" height="831" viewBox="0 0 1439 831"><g stroke="#c8c8c8" stroke-width="1.1" fill="none"><path d="M1113 222.5 A4 4 0 0 1 1120.5 220.5"/><rect x="1116.5" y="222.5" width="9" height="6"/></g><rect x="1120.5" y="225.0" width="1" height="1.6" fill="#c8c8c8"/><g stroke="#c8c8c8" stroke-width="1.1" fill="none"><path d="M1113 242.0 A4 4 0 0 1 1120.5 240.0"/><rect x="1116.5" y="242.0" width="9" height="6"/></g><rect x="1120.5" y="244.5" width="1" height="1.6" fill="#c8c8c8"/><g stroke="#c8c8c8" stroke-width="1.1" fill="none"><path d="M1113 261.5 A4 4 0 0 1 1120.5 259.5"/><rect x="1116.5" y="261.5" width="9" height="6"/></g><rect x="1120.5" y="264.0" width="1" height="1.6" fill="#c8c8c8"/></svg>
<div class="a" style="left:1032px;top:277px;width:95px;height:18px;background:#282828;border-radius:4px;"></div>
<div class="t" style="left:1039px;top:280px;color:#e6e6e6;font-size:11px;line-height:13px;letter-spacing:0.35px;-webkit-text-stroke:0.25px #e6e6e6;">XYZ Euler</div>
<svg style="left:0px;top:0px" width="1439" height="831" viewBox="0 0 1439 831"><path d="M1117.3 284.4 L1120.5 287.6 L1123.7 284.4" stroke="#e6e6e6" stroke-width="1.2" fill="none" stroke-linecap="round" stroke-linejoin="round"/></svg>
<div class="t" style="left:1032px;top:302px;color:#d0d0d0;font-size:11px;line-height:13px;letter-spacing:0.35px;-webkit-text-stroke:0.25px #d0d0d0;">Scale:</div>
<div class="a" style="left:1032px;top:319px;width:69px;height:58px;background:#565656;border-radius:4px;"></div>
<div class="t" style="left:887px;width:200px;text-align:right;top:321px;color:#e6e6e6;font-size:11px;line-height:13px;letter-spacing:0.35px;-webkit-text-stroke:0.25px #e6e6e6;">0.249</div>
<div class="a" style="left:1032px;top:338px;width:69px;height:1px;background:#474747;border-radius:0;"></div>
<div class="t" style="left:887px;width:200px;text-align:right;top:340px;color:#e6e6e6;font-size:11px;line-height:13px;letter-spacing:0.35px;-webkit-text-stroke:0.25px #e6e6e6;">0.249</div>
<div class="a" style="left:1032px;top:358px;width:69px;height:1px;background:#474747;border-radius:0;"></div>
<div class="t" style="left:887px;width:200px;text-align:right;top:360px;color:#e6e6e6;font-size:11px;line-height:13px;letter-spacing:0.35px;-webkit-text-stroke:0.25px #e6e6e6;">0.249</div>
<svg style="left:0px;top:0px" width="1439" height="831" viewBox="0 0 1439 831"><g stroke="#c8c8c8" stroke-width="1.1" fill="none"><path d="M1113 326.5 A4 4 0 0 1 1120.5 324.5"/><rect x="1116.5" y="326.5" width="9" height="6"/></g><rect x="1120.5" y="329.0" width="1" height="1.6" fill="#c8c8c8"/><g stroke="#c8c8c8" stroke-width="1.1" fill="none"><path d="M1113 346.0 A4 4 0 0 1 1120.5 344.0"/><rect x="1116.5" y="346.0" width="9" height="6"/></g><rect x="1120.5" y="348.5" width="1" height="1.6" fill="#c8c8c8"/><g stroke="#c8c8c8" stroke-width="1.1" fill="none"><path d="M1113 365.5 A4 4 0 0 1 1120.5 363.5"/><rect x="1116.5" y="365.5" width="9" height="6"/></g><rect x="1120.5" y="368.0" width="1" height="1.6" fill="#c8c8c8"/></svg>
<div class="t" style="left:1032px;top:384px;color:#d0d0d0;font-size:11px;line-height:13px;letter-spacing:0.35px;-webkit-text-stroke:0.25px #d0d0d0;">Dimensions:</div>
<div class="a" style="left:1032px;top:401px;width:95px;height:58px;background:#565656;border-radius:4px;"></div>
<div class="t" style="left:950px;width:200px;text-align:center;top:403px;color:#e6e6e6;font-size:11px;line-height:13px;letter-spacing:0.35px;-webkit-text-stroke:0.25px #e6e6e6;">X</div>
<div class="t" style="left:913px;width:200px;text-align:right;top:403px;color:#e6e6e6;font-size:11px;line-height:13px;letter-spacing:0.35px;-webkit-text-stroke:0.25px #e6e6e6;">0.125 m</div>
<div class="a" style="left:1032px;top:420px;width:95px;height:1px;background:#474747;border-radius:0;"></div>
<div class="t" style="left:950px;width:200px;text-align:center;top:422px;color:#e6e6e6;font-size:11px;line-height:13px;letter-spacing:0.35px;-webkit-text-stroke:0.25px #e6e6e6;">Y</div>
<div class="t" style="left:913px;width:200px;text-align:right;top:422px;color:#e6e6e6;font-size:11px;line-height:13px;letter-spacing:0.35px;-webkit-text-stroke:0.25px #e6e6e6;">0.372 m</div>
<div class="a" style="left:1032px;top:440px;width:95px;height:1px;background:#474747;border-radius:0;"></div>
<div class="t" style="left:950px;width:200px;text-align:center;top:442px;color:#e6e6e6;font-size:11px;line-height:13px;letter-spacing:0.35px;-webkit-text-stroke:0.25px #e6e6e6;">Z</div>
<div class="t" style="left:913px;width:200px;text-align:right;top:442px;color:#e6e6e6;font-size:11px;line-height:13px;letter-spacing:0.35px;-webkit-text-stroke:0.25px #e6e6e6;">0.178 m</div>
<div class="a" style="left:1166px;top:71px;width:273px;height:20px;background:#2b2b2b;border-radius:0;"></div>
<div class="a" style="left:1166px;top:111px;width:273px;height:20px;background:#2b2b2b;border-radius:0;"></div>
<div class="a" style="left:1166px;top:151px;width:273px;height:20px;background:#2b2b2b;border-radius:0;"></div>
<div class="a" style="left:1166px;top:191px;width:273px;height:20px;background:#2b2b2b;border-radius:0;"></div>
<div class="a" style="left:1166px;top:231px;width:273px;height:20px;background:#2b2b2b;border-radius:0;"></div>
<div class="a" style="left:1166px;top:271px;width:273px;height:2px;background:#2b2b2b;border-radius:0;"></div>
<div class="a" style="left:1166px;top:212px;width:273px;height:20px;background:#334d80;border-radius:0;"></div>
<div class="a" style="left:1166px;top:253px;width:273px;height:20px;background:#282828;border-radius:0 0 6px 6px;"></div>
<div class="a" style="left:1175px;top:29px;width:31px;height:18px;background:#282828;border-radius:4px;box-shadow:inset 0 0 0 1px rgba(0,0,0,0.12)"></div>
<div class="a" style="left:1211px;top:29px;width:32px;height:18px;background:#282828;border-radius:4px;box-shadow:inset 0 0 0 1px rgba(0,0,0,0.12)"></div>
<div class="a" style="left:1260px;top:29px;width:118px;height:19px;background:#1d1d1d;border-radius:4px;box-shadow:inset 0 0 0 1px #2a2a2a"></div>
<div class="a" style="left:1395px;top:29px;width:31px;height:18px;background:#282828;border-radius:4px;box-shadow:inset 0 0 0 1px rgba(0,0,0,0.12)"></div>
<div class="a" style="left:1432px;top:29px;width:10px;height:18px;background:#545454;border-radius:4px 0 0 4px;"></div>
<div class="t" style="left:1285px;top:33px;color:#767676;font-size:11px;line-height:13px;letter-spacing:0.35px;-webkit-text-stroke:0.25px #767676;">Search</div>
<div class="t" style="left:1210px;top:56px;color:#e6e6e6;font-size:11px;line-height:13px;letter-spacing:0.35px;-webkit-text-stroke:0.25px #e6e6e6;">Scene Collection</div>
<div class="a" style="left:1206px;top:72px;width:20px;height:19px;background:#3d3d3d;border-radius:4px;box-shadow:inset 0 0 0 1px #555"></div>
<div class="t" style="left:1230px;top:76px;color:#e6e6e6;font-size:11px;line-height:13px;letter-spacing:0.35px;-webkit-text-stroke:0.25px #e6e6e6;">blueprint</div>
<div class="t" style="left:1250px;top:97px;color:#e6e6e6;font-size:11px;line-height:13px;letter-spacing:0.35px;-webkit-text-stroke:0.25px #e6e6e6;">front</div>
<div class="t" style="left:1250px;top:117px;color:#8a8a8a;font-size:11px;line-height:13px;letter-spacing:0.35px;-webkit-text-stroke:0.25px #8a8a8a;">irl reference</div>
<div class="t" style="left:1250px;top:137px;color:#e6e6e6;font-size:11px;line-height:13px;letter-spacing:0.35px;-webkit-text-stroke:0.25px #e6e6e6;">rear</div>
<div class="t" style="left:1250px;top:157px;color:#e6e6e6;font-size:11px;line-height:13px;letter-spacing:0.35px;-webkit-text-stroke:0.25px #e6e6e6;">side</div>
<div class="t" style="left:1250px;top:177px;color:#e6e6e6;font-size:11px;line-height:13px;letter-spacing:0.35px;-webkit-text-stroke:0.25px #e6e6e6;">side2</div>
<div class="t" style="left:1250px;top:197px;color:#e6e6e6;font-size:11px;line-height:13px;letter-spacing:0.35px;-webkit-text-stroke:0.25px #e6e6e6;">top</div>
<div class="a" style="left:1206px;top:213px;width:20px;height:18px;background:#56698f;border-radius:4px;box-shadow:inset 0 0 0 1px #6a7ea5"></div>
<div class="t" style="left:1230px;top:217px;color:#f0a040;font-size:11px;line-height:13px;letter-spacing:0.35px;-webkit-text-stroke:0.25px #f0a040;">plane</div>
<svg style="left:0px;top:0px" width="1439" height="831" viewBox="0 0 1439 831"><g fill="#e6e6e6"><rect x="1179" y="31" width="5" height="2.5"/><rect x="1185" y="35" width="7" height="2.5"/><rect x="1185" y="40" width="7" height="2.5"/></g><path d="M1181.5 33.5 V41 H1185 M1181.5 36.3 H1185" stroke="#e6e6e6" stroke-width="0.8" fill="none"/><path d="M1196.5 36.75 L1200 40.25 L1203.5 36.75" stroke="#e6e6e6" stroke-width="1.3" fill="none" stroke-linecap="round" stroke-linejoin="round"/><g stroke="#e6e6e6" stroke-width="0.9" fill="none"><path d="M1216 34 V44 H1226"/><path d="M1218 32.5 V42 H1228"/><rect x="1220" y="31" width="9" height="9"/></g><path d="M1220.5 40 L1223.5 34.5 L1227 40 Z" fill="#e6e6e6"/><circle cx="1226.5" cy="33.5" r="1" fill="#e6e6e6"/><path d="M1232.5 36.75 L1236 40.25 L1239.5 36.75" stroke="#e6e6e6" stroke-width="1.3" fill="none" stroke-linecap="round" stroke-linejoin="round"/><circle cx="1272" cy="36" r="4.2" fill="none" stroke="#e6e6e6" stroke-width="1.2"/><path d="M1269 39 L1264.5 43.5" stroke="#e6e6e6" stroke-width="1.2"/><path d="M1398.5 31.5 H1411.5 L1406.5 37.5 V44.5 L1403.5 43 V37.5 Z" fill="none" stroke="#e6e6e6" stroke-width="1.1" stroke-linejoin="round"/><path d="M1416.0 36.75 L1419.5 40.25 L1423.0 36.75" stroke="#e6e6e6" stroke-width="1.3" fill="none" stroke-linecap="round" stroke-linejoin="round"/><rect x="1189" y="54" width="14" height="4" fill="#e6e6e6"/><rect x="1190" y="59" width="12" height="8" fill="#e6e6e6"/><rect x="1194.5" y="61" width="3" height="1.3" fill="#282828"/><path d="M1192.5 79.0 L1196.5 83.0 L1200.5 79.0" stroke="#cfcfcf" stroke-width="1.2" fill="none" stroke-linecap="round" stroke-linejoin="round"/><rect x="1209" y="75" width="14" height="4" fill="#e6e6e6"/><rect x="1210" y="80" width="12" height="8" fill="#e6e6e6"/><rect x="1214.5" y="82" width="3" height="1.3" fill="#3d3d3d"/><rect x="1375" y="76" width="11" height="11" rx="1.5" fill="#e6e6e6"/><path d="M1377.5 81.5 L1379.8 84 L1384 78.5" stroke="#222" stroke-width="1.6" fill="none"/><path d="M1394 81.0 Q1401 73.5 1408 81.0 Q1401 88.5 1394 81.0 Z" fill="#e6e6e6"/><circle cx="1401" cy="81.0" r="3" fill="#282828"/><circle cx="1401" cy="81.0" r="1.6" fill="#e6e6e6"/><path d="M1413 78 H1416.5 L1418 75 H1423 L1424.5 78 H1428 V87.5 H1413 Z" fill="#e6e6e6"/><circle cx="1420.5" cy="82.5" r="3.6" fill="#282828"/><circle cx="1420.5" cy="82.5" r="2.1" fill="#e6e6e6"/><path d="M1195.5 95 V211" stroke="#5a5a5a" stroke-width="1"/><path d="M1215 97 L1219 101 L1215 105" stroke="#cfcfcf" stroke-width="1.2" fill="none"/><rect x="1229" y="94" width="14" height="14" fill="#d0864a"/><path d="M1231 107 L1235.5 99 L1240 107 Z" fill="#222"/><circle cx="1239.5" cy="97.5" r="1.4" fill="#222"/><path d="M1301 94.5 H1311.5 V107.5 H1308" stroke="#c85a63" stroke-width="1.1" fill="none"/><path d="M1298.5 104 V94.5 H1301" stroke="#c85a63" stroke-width="1.1" fill="none"/><path d="M1298.5 107.5 L1303 100 L1307.5 107.5 Z" fill="#c85a63"/><circle cx="1308" cy="97.8" r="1.4" fill="#c85a63"/><path d="M1394 101.0 Q1401 93.5 1408 101.0 Q1401 108.5 1394 101.0 Z" fill="#e6e6e6"/><circle cx="1401" cy="101.0" r="3" fill="#282828"/><circle cx="1401" cy="101.0" r="1.6" fill="#e6e6e6"/><path d="M1413 98 H1416.5 L1418 95 H1423 L1424.5 98 H1428 V107.5 H1413 Z" fill="#e6e6e6"/><circle cx="1420.5" cy="102.5" r="3.6" fill="#282828"/><circle cx="1420.5" cy="102.5" r="2.1" fill="#e6e6e6"/><path d="M1215 117 L1219 121 L1215 125" stroke="#777" stroke-width="1.2" fill="none"/><rect x="1229" y="114" width="14" height="14" fill="#6e5038"/><path d="M1231 127 L1235.5 119 L1240 127 Z" fill="#222"/><circle cx="1239.5" cy="117.5" r="1.4" fill="#222"/><path d="M1337 114.5 H1347.5 V127.5 H1344" stroke="#8a4a50" stroke-width="1.1" fill="none"/><path d="M1334.5 124 V114.5 H1337" stroke="#8a4a50" stroke-width="1.1" fill="none"/><path d="M1334.5 127.5 L1339 120 L1343.5 127.5 Z" fill="#8a4a50"/><circle cx="1344" cy="117.8" r="1.4" fill="#8a4a50"/><path d="M1394 119 Q1401 126 1408 119" stroke="#cfcfcf" stroke-width="1.1" fill="none"/><path d="M1413 118 H1416.5 L1418 115 H1423 L1424.5 118 H1428 V127.5 H1413 Z" fill="#e6e6e6"/><circle cx="1420.5" cy="122.5" r="3.6" fill="#282828"/><circle cx="1420.5" cy="122.5" r="2.1" fill="#e6e6e6"/><path d="M1215 137 L1219 141 L1215 145" stroke="#cfcfcf" stroke-width="1.2" fill="none"/><rect x="1229" y="134" width="14" height="14" fill="#d0864a"/><path d="M1231 147 L1235.5 139 L1240 147 Z" fill="#222"/><circle cx="1239.5" cy="137.5" r="1.4" fill="#222"/><path d="M1295 134.5 H1305.5 V147.5 H1302" stroke="#c85a63" stroke-width="1.1" fill="none"/><path d="M1292.5 144 V134.5 H1295" stroke="#c85a63" stroke-width="1.1" fill="none"/><path d="M1292.5 147.5 L1297 140 L1301.5 147.5 Z" fill="#c85a63"/><circle cx="1302" cy="137.8" r="1.4" fill="#c85a63"/><path d="M1394 141.0 Q1401 133.5 1408 141.0 Q1401 148.5 1394 141.0 Z" fill="#e6e6e6"/><circle cx="1401" cy="141.0" r="3" fill="#282828"/><circle cx="1401" cy="141.0" r="1.6" fill="#e6e6e6"/><path d="M1413 138 H1416.5 L1418 135 H1423 L1424.5 138 H1428 V147.5 H1413 Z" fill="#e6e6e6"/><circle cx="1420.5" cy="142.5" r="3.6" fill="#282828"/><circle cx="1420.5" cy="142.5" r="2.1" fill="#e6e6e6"/><path d="M1215 157 L1219 161 L1215 165" stroke="#cfcfcf" stroke-width="1.2" fill="none"/><rect x="1229" y="154" width="14" height="14" fill="#d0864a"/><path d="M1231 167 L1235.5 159 L1240 167 Z" fill="#222"/><circle cx="1239.5" cy="157.5" r="1.4" fill="#222"/><path d="M1297 154.5 H1307.5 V167.5 H1304" stroke="#c85a63" stroke-width="1.1" fill="none"/><path d="M1294.5 164 V154.5 H1297" stroke="#c85a63" stroke-width="1.1" fill="none"/><path d="M1294.5 167.5 L1299 160 L1303.5 167.5 Z" fill="#c85a63"/><circle cx="1304" cy="157.8" r="1.4" fill="#c85a63"/><path d="M1394 161.0 Q1401 153.5 1408 161.0 Q1401 168.5 1394 161.0 Z" fill="#e6e6e6"/><circle cx="1401" cy="161.0" r="3" fill="#282828"/><circle cx="1401" cy="161.0" r="1.6" fill="#e6e6e6"/><path d="M1413 158 H1416.5 L1418 155 H1423 L1424.5 158 H1428 V167.5 H1413 Z" fill="#e6e6e6"/><circle cx="1420.5" cy="162.5" r="3.6" fill="#282828"/><circle cx="1420.5" cy="162.5" r="2.1" fill="#e6e6e6"/><path d="M1215 177 L1219 181 L1215 185" stroke="#cfcfcf" stroke-width="1.2" fill="none"/><rect x="1229" y="174" width="14" height="14" fill="#d0864a"/><path d="M1231 187 L1235.5 179 L1240 187 Z" fill="#222"/><circle cx="1239.5" cy="177.5" r="1.4" fill="#222"/><path d="M1304 174.5 H1314.5 V187.5 H1311" stroke="#c85a63" stroke-width="1.1" fill="none"/><path d="M1301.5 184 V174.5 H1304" stroke="#c85a63" stroke-width="1.1" fill="none"/><path d="M1301.5 187.5 L1306 180 L1310.5 187.5 Z" fill="#c85a63"/><circle cx="1311" cy="177.8" r="1.4" fill="#c85a63"/><path d="M1394 181.0 Q1401 173.5 1408 181.0 Q1401 188.5 1394 181.0 Z" fill="#e6e6e6"/><circle cx="1401" cy="181.0" r="3" fill="#282828"/><circle cx="1401" cy="181.0" r="1.6" fill="#e6e6e6"/><path d="M1413 178 H1416.5 L1418 175 H1423 L1424.5 178 H1428 V187.5 H1413 Z" fill="#e6e6e6"/><circle cx="1420.5" cy="182.5" r="3.6" fill="#282828"/><circle cx="1420.5" cy="182.5" r="2.1" fill="#e6e6e6"/><path d="M1215 197 L1219 201 L1215 205" stroke="#cfcfcf" stroke-width="1.2" fill="none"/><rect x="1229" y="194" width="14" height="14" fill="#d0864a"/><path d="M1231 207 L1235.5 199 L1240 207 Z" fill="#222"/><circle cx="1239.5" cy="197.5" r="1.4" fill="#222"/><path d="M1293 194.5 H1303.5 V207.5 H1300" stroke="#c85a63" stroke-width="1.1" fill="none"/><path d="M1290.5 204 V194.5 H1293" stroke="#c85a63" stroke-width="1.1" fill="none"/><path d="M1290.5 207.5 L1295 200 L1299.5 207.5 Z" fill="#c85a63"/><circle cx="1300" cy="197.8" r="1.4" fill="#c85a63"/><path d="M1394 201.0 Q1401 193.5 1408 201.0 Q1401 208.5 1394 201.0 Z" fill="#e6e6e6"/><circle cx="1401" cy="201.0" r="3" fill="#282828"/><circle cx="1401" cy="201.0" r="1.6" fill="#e6e6e6"/><path d="M1413 198 H1416.5 L1418 195 H1423 L1424.5 198 H1428 V207.5 H1413 Z" fill="#e6e6e6"/><circle cx="1420.5" cy="202.5" r="3.6" fill="#282828"/><circle cx="1420.5" cy="202.5" r="2.1" fill="#e6e6e6"/><path d="M1194 217 L1198 221 L1194 225" stroke="#cfcfcf" stroke-width="1.2" fill="none"/><path d="M1209 215.5 H1223 L1216 229.5 Z" fill="#e89850" stroke="#e89850" stroke-width="0.8" stroke-linejoin="round"/><path d="M1213.3 218.6 H1218.7 L1216 224.4 Z" fill="#56698f"/><path d="M1284.5 227.5 L1289.8 222.2 M1289.8 222.2 A3.8 3.8 0 0 1 1294.8 216.6 L1292.6 218.8 L1293.4 220.6 L1295.2 221.4 L1297.4 219.2 A3.8 3.8 0 0 1 1291.8 224.2" stroke="#5a8fe6" stroke-width="3.4" fill="none" stroke-linecap="round" stroke-linejoin="round"/><path d="M1284.5 227.5 L1289.8 222.2 M1289.8 222.2 A3.8 3.8 0 0 1 1294.8 216.6 L1292.6 218.8 L1293.4 220.6 L1295.2 221.4 L1297.4 219.2 A3.8 3.8 0 0 1 1291.8 224.2" stroke="#334d80" stroke-width="1.2" fill="none" stroke-linecap="round" stroke-linejoin="round"/><path d="M1303.5 216.5 H1315.5 L1309.5 228 Z" fill="none" stroke="#30c8b0" stroke-width="1.2"/><g fill="#334d80" stroke="#30c8b0" stroke-width="1.1"><rect x="1301.8" y="214.8" width="3.4" height="3.4"/><rect x="1313.8" y="214.8" width="3.4" height="3.4"/><rect x="1307.8" y="226.3" width="3.4" height="3.4"/></g><path d="M1394 222.0 Q1401 214.5 1408 222.0 Q1401 229.5 1394 222.0 Z" fill="#e6e6e6"/><circle cx="1401" cy="222.0" r="3" fill="#282828"/><circle cx="1401" cy="222.0" r="1.6" fill="#e6e6e6"/><path d="M1413 219 H1416.5 L1418 216 H1423 L1424.5 219 H1428 V228.5 H1413 Z" fill="#e6e6e6"/><circle cx="1420.5" cy="223.5" r="3.6" fill="#334d80"/><circle cx="1420.5" cy="223.5" r="2.1" fill="#e6e6e6"/></svg>
<div class="a" style="left:1174px;top:280px;width:31px;height:19px;background:#282828;border-radius:4px;box-shadow:inset 0 0 0 1px rgba(0,0,0,0.12)"></div>
<div class="a" style="left:1210px;top:280px;width:68px;height:19px;background:#282828;border-radius:4px;box-shadow:inset 0 0 0 1px rgba(0,0,0,0.12)"></div>
<div class="t" style="left:1236px;top:284px;color:#e6e6e6;font-size:11px;line-height:13px;letter-spacing:0.35px;-webkit-text-stroke:0.25px #e6e6e6;">View</div>
<div class="t" style="left:1290px;top:284px;color:#e6e6e6;font-size:11px;line-height:13px;letter-spacing:0.35px;-webkit-text-stroke:0.25px #e6e6e6;">View</div>
<div class="t" style="left:1331px;top:284px;color:#e6e6e6;font-size:11px;line-height:13px;letter-spacing:0.35px;-webkit-text-stroke:0.25px #e6e6e6;">Image</div>
<div class="a" style="left:1390px;top:280px;width:30px;height:19px;background:#282828;border-radius:4px;box-shadow:inset 0 0 0 1px rgba(0,0,0,0.12)"></div>
<div class="a" style="left:1421px;top:280px;width:20px;height:19px;background:#1d1d1d;border-radius:0;"></div>
<div class="t" style="left:1427px;top:284px;color:#e6e6e6;font-size:11px;line-height:13px;letter-spacing:0.35px;-webkit-text-stroke:0.25px #e6e6e6;">P9</div>
<svg style="left:0px;top:0px" width="1439" height="831" viewBox="0 0 1439 831"><path d="M1178.5 284 V296.5 H1190.5" stroke="#e6e6e6" stroke-width="1" fill="none"/><path d="M1181 283 H1189 V287 H1186.5 V293 H1183.5 V287 H1181 Z" fill="#e6e6e6"/><path d="M1190.5 285 V296.5" stroke="#e6e6e6" stroke-width="1"/><path d="M1195.0 288.25 L1198.5 291.75 L1202.0 288.25" stroke="#e6e6e6" stroke-width="1.3" fill="none" stroke-linecap="round" stroke-linejoin="round"/><rect x="1215.5" y="283.5" width="13" height="13" fill="none" stroke="#e6e6e6" stroke-width="1"/><path d="M1215 296.5 L1219.5 288.5 L1224 296.5 Z" fill="#e6e6e6"/><circle cx="1225" cy="287" r="1.3" fill="#e6e6e6"/><path d="M1267.5 288.25 L1271 291.75 L1274.5 288.25" stroke="#e6e6e6" stroke-width="1.3" fill="none" stroke-linecap="round" stroke-linejoin="round"/><rect x="1394.5" y="283.5" width="13" height="13" fill="none" stroke="#e6e6e6" stroke-width="1"/><path d="M1394 296.5 L1398.5 288.5 L1403 296.5 Z" fill="#e6e6e6"/><circle cx="1404" cy="287" r="1.3" fill="#e6e6e6"/><path d="M1410.5 288.25 L1414 291.75 L1417.5 288.25" stroke="#e6e6e6" stroke-width="1.3" fill="none" stroke-linecap="round" stroke-linejoin="round"/><circle cx="1166" cy="323" r="6" fill="#2a2a2a"/><path d="M1167 319.5 L1170 323 L1167 326.5" stroke="#9a9a9a" stroke-width="1" fill="none"/><circle cx="1439" cy="323" r="6" fill="#2a2a2a"/><path d="M1437.5 319.5 L1434.5 323 L1437.5 326.5" stroke="#9a9a9a" stroke-width="1" fill="none"/><circle cx="1416" cy="325" r="13.5" fill="#262626"/><circle cx="1416" cy="356" r="13.5" fill="#262626"/><circle cx="1418" cy="323" r="5.5" fill="none" stroke="#e6e6e6" stroke-width="1.5"/><path d="M1414 327 L1409 332" stroke="#e6e6e6" stroke-width="2" stroke-linecap="round"/><path d="M1418 320.5 V325.5 M1415.5 323 H1420.5" stroke="#e6e6e6" stroke-width="1.2"/><g transform="translate(1416 356)"><g stroke="#e6e6e6" stroke-width="2.1" stroke-linecap="round"><path d="M-3.4 -0.5 V-5.5 M-1.1 -1 V-7.5 M1.2 -1 V-7 M3.4 -0.5 V-5"/><path d="M-4.6 2.2 L-6.3 -0.6"/></g><path d="M-4.5 -0.5 H4.5 V2.5 C4.5 5.5 2.5 7 0 7 C-2.5 7 -4.5 5.5 -4.5 2.5 Z" fill="#e6e6e6"/></g></svg>
<svg style="left:0px;top:0px" width="1439" height="831" viewBox="0 0 1439 831"><defs><clipPath id="imclip"><rect x="1166" y="406" width="273" height="263"/></clipPath><linearGradient id="fairg" x1="0" y1="0" x2="1" y2="1"><stop offset="0" stop-color="#f0f0f0"/><stop offset="1" stop-color="#c4c4c4"/></linearGradient><linearGradient id="tankg" x1="0" y1="0" x2="0" y2="1"><stop offset="0" stop-color="#e4e4e4"/><stop offset="1" stop-color="#a8a8a8"/></linearGradient><linearGradient id="seatg" x1="0" y1="0" x2="0" y2="1"><stop offset="0" stop-color="#c8c8c8"/><stop offset="1" stop-color="#9c9c9c"/></linearGradient></defs><g clip-path="url(#imclip)"><path d="M1232 500 L1335 530 L1345 560 L1330 600 L1250 612 L1236 560 Z" fill="#c9c9c9"/><path d="M1338 525 L1420 505 L1432 540 L1400 560 L1350 560 Z" fill="#d8d8d8"/><path d="M1250 520 L1290 515 L1300 545 L1262 552 Z" fill="#9a9a9a" opacity="0.6"/><ellipse cx="1438" cy="601" rx="60" ry="54" fill="#262626"/><ellipse cx="1438" cy="601" rx="50" ry="45" fill="#5a5a5a"/><ellipse cx="1438" cy="601" rx="44" ry="40" fill="#7a7a7a"/><g stroke="#2e2e2e" stroke-width="2.6"><line x1="1438" y1="601" x2="1481.1" y2="608.9"/><line x1="1438" y1="601" x2="1467.7" y2="630.5"/><line x1="1438" y1="601" x2="1443.0" y2="640.7"/><line x1="1438" y1="601" x2="1416.4" y2="635.8"/><line x1="1438" y1="601" x2="1398.0" y2="617.6"/><line x1="1438" y1="601" x2="1394.9" y2="593.1"/><line x1="1438" y1="601" x2="1408.3" y2="571.5"/><line x1="1438" y1="601" x2="1433.0" y2="561.3"/><line x1="1438" y1="601" x2="1459.6" y2="566.2"/><line x1="1438" y1="601" x2="1478.0" y2="584.4"/></g><ellipse cx="1438" cy="601" rx="14" ry="13" fill="#a0a0a0"/><path d="M1380 560 C1395 545 1425 540 1439 542 L1439 552 C1420 552 1398 558 1386 570 Z" fill="#3a3a3a"/><ellipse cx="1204" cy="577" rx="39" ry="47" fill="#1e1e1e"/><ellipse cx="1204" cy="577" rx="32" ry="39" fill="#8a8a8a"/><ellipse cx="1204" cy="577" rx="28" ry="35" fill="#b8b8b8"/><g stroke="#2e2e2e" stroke-width="4"><line x1="1204" y1="577" x2="1230.7" y2="587.3"/><line x1="1204" y1="577" x2="1204.4" y2="612.0"/><line x1="1204" y1="577" x2="1177.5" y2="588.3"/><line x1="1204" y1="577" x2="1187.2" y2="549.0"/><line x1="1204" y1="577" x2="1220.1" y2="548.4"/></g><ellipse cx="1204" cy="577" rx="14" ry="17" fill="none" stroke="#6a6a6a" stroke-width="3"/><ellipse cx="1204" cy="577" rx="6" ry="7" fill="#555"/><path d="M1170 540 C1188 525 1225 525 1244 548 L1238 556 C1222 538 1192 536 1176 550 Z" fill="#2a2a2a"/><path d="M1248 555 L1318 552 L1318 608 L1262 616 L1240 600 Z" fill="#c6c6c0"/><ellipse cx="1276" cy="586" rx="17" ry="16" fill="#d8d8cc"/><ellipse cx="1276" cy="586" rx="8" ry="8" fill="#b4b4a4"/><path d="M1300 560 L1318 558 L1318 600 L1304 604 Z" fill="#a8a8a8"/><path d="M1240 600 L1262 616 L1370 611 L1374 621 L1362 628 L1290 627 L1252 620 Z" fill="#c8c8c8"/><path d="M1290 621 L1362 617" stroke="#707070" stroke-width="2"/><path d="M1334 572 L1372 557 L1412 578 L1442 612 L1422 619 L1360 597 Z" fill="#d2d2d2"/><path d="M1372 572 L1402 584 L1400 591 L1370 580 Z" fill="#8e8e8e"/><path d="M1352 598 L1422 621" stroke="#7a7a7a" stroke-width="2"/><path d="M1334 545 L1350 540 L1354 560 L1340 566 Z" fill="#c8a040"/><path d="M1338 556 L1352 553 M1338 561 L1352 558" stroke="#c03030" stroke-width="2"/><path d="M1256 476 C1278 470 1302 468 1318 474 C1332 480 1340 495 1343 510 L1336 524 C1318 520 1290 512 1264 504 L1252 494 Z" fill="url(#tankg)"/><path d="M1337 508 C1360 506 1390 504 1404 500 L1406 486 L1439 484 L1439 497 L1404 518 C1382 522 1356 522 1338 522 Z" fill="url(#seatg)"/><path d="M1406 486 L1439 484 L1439 496 L1410 500 Z" fill="#c4c4c4"/><polygon points="1232,500 1282,522 1320,540 1333,556 1331,607 1318,608 1316,566 1300,552 1270,538 1238,518" fill="#363636"/><polygon points="1222,489 1234,486 1339,521 1341,531 1326,533 1228,503" fill="#3c3c3c"/><polygon points="1276,512 1296,519 1300,530 1280,526" fill="#d0d0d0"/><polygon points="1220,488 1236,488 1240,530 1226,532" fill="#2e2e2e"/><polygon points="1234,528 1243,526 1249,560 1240,562" fill="#3a3a3a"/><path d="M1242 557 L1300 555" stroke="#3a3a3a" stroke-width="3"/><path d="M1330 534 L1439 497 M1334 543 L1439 506 M1372 540 L1400 558 M1398 530 L1424 548" stroke="#383838" stroke-width="3.8" fill="none"/><path d="M1172 511 C1176 498 1186 482 1200 475 C1215 468 1236 462 1254 455 L1258 476 L1252 498 L1236 514 L1230 530 L1200 533 C1186 532 1176 528 1170 528 Z" fill="url(#fairg)"/><path d="M1190 494 C1196 484 1208 480 1222 480 L1224 508 L1198 510 C1192 506 1188 500 1190 494 Z" fill="#8e8e8e" opacity="0.75"/><path d="M1170 528 C1190 536 1215 535 1230 532 L1238 540 C1215 545 1185 542 1166 536 Z" fill="#e4e4e4"/><path d="M1218 462 C1232 456 1250 450 1258 452 L1262 460 C1250 462 1235 466 1222 470 Z" fill="#d4d4d4"/><ellipse cx="1245" cy="440" rx="6.5" ry="6" fill="#e8e8e8" stroke="#6a6a6a" stroke-width="1.4"/><path d="M1239 445 L1226 462" stroke="#7a7a7a" stroke-width="2.4"/><ellipse cx="1194" cy="469" rx="5" ry="6.5" fill="#dadada" stroke="#6a6a6a" stroke-width="1.4"/><path d="M1232 470 L1252 466 L1262 484 L1240 490 Z" fill="#d8d8d8"/><path d="M1250 480 L1274 482 L1278 486" stroke="#2a2a2a" stroke-width="3.2" fill="none"/><circle cx="1230" cy="481" r="1.8" fill="#d02020"/><circle cx="1246" cy="472" r="1.8" fill="#d02020"/><circle cx="1256" cy="476" r="1.5" fill="#d02020"/><path d="M1216 494 L1226 497 L1212 554 L1200 550 Z" fill="#9a9850"/><path d="M1204 552 L1214 555 L1206 584 L1196 581 Z" fill="#8a8848"/><path d="M1204 566 L1220 562 L1224 582 L1210 588 Z" fill="#c8b470"/><path d="M1200 541 L1214 537" stroke="#a02020" stroke-width="1.5"/></g></svg>
<div class="a" style="left:9px;top:750px;width:31px;height:19px;background:#282828;border-radius:4px;box-shadow:inset 0 0 0 1px rgba(0,0,0,0.12)"></div>
<div class="a" style="left:45px;top:750px;width:133px;height:19px;background:#282828;border-radius:4px;box-shadow:inset 0 0 0 1px rgba(0,0,0,0.12)"></div>
<div class="a" style="left:116px;top:751px;width:1px;height:17px;background:#3a3a3a;border-radius:0;"></div>
<div class="t" style="left:53px;top:753px;color:#e6e6e6;font-size:11px;line-height:13px;letter-spacing:0.35px;-webkit-text-stroke:0.25px #e6e6e6;">Playback</div>
<div class="t" style="left:124px;top:753px;color:#e6e6e6;font-size:11px;line-height:13px;letter-spacing:0.35px;-webkit-text-stroke:0.25px #e6e6e6;">Keying</div>
<div class="t" style="left:187px;top:753px;color:#e6e6e6;font-size:11px;line-height:13px;letter-spacing:0.35px;-webkit-text-stroke:0.25px #e6e6e6;">View</div>
<div class="t" style="left:228px;top:753px;color:#e6e6e6;font-size:11px;line-height:13px;letter-spacing:0.35px;-webkit-text-stroke:0.25px #e6e6e6;">Marker</div>
<div class="a" style="left:490px;top:751px;width:38px;height:18px;background:#282828;border-radius:4px;box-shadow:inset 0 0 0 1px rgba(0,0,0,0.12)"></div>
<div class="a" style="left:490px;top:751px;width:18px;height:18px;background:#3d3d3d;border-radius:4px 0 0 4px;"></div>
<div class="a" style="left:535px;top:751px;width:118px;height:18px;background:#3d3d3d;border-radius:4px;"></div>
<div class="a" style="left:555px;top:751px;width:1px;height:18px;background:#2f2f2f;border-radius:0;"></div>
<div class="a" style="left:574px;top:751px;width:1px;height:18px;background:#2f2f2f;border-radius:0;"></div>
<div class="a" style="left:594px;top:751px;width:1px;height:18px;background:#2f2f2f;border-radius:0;"></div>
<div class="a" style="left:614px;top:751px;width:1px;height:18px;background:#2f2f2f;border-radius:0;"></div>
<div class="a" style="left:633px;top:751px;width:1px;height:18px;background:#2f2f2f;border-radius:0;"></div>
<div class="a" style="left:882px;top:751px;width:73px;height:18px;background:#545454;border-radius:4px;"></div>
<div class="t" style="left:817px;width:200px;text-align:center;top:753px;color:#e6e6e6;font-size:11px;line-height:13px;letter-spacing:0.35px;-webkit-text-stroke:0.25px #e6e6e6;">144</div>
<div class="a" style="left:962px;top:751px;width:193px;height:18px;background:#545454;border-radius:4px;"></div>
<div class="a" style="left:962px;top:751px;width:19px;height:18px;background:#3d3d3d;border-radius:4px 0 0 4px;"></div>
<div class="a" style="left:1069px;top:751px;width:1px;height:18px;background:#444;border-radius:0;"></div>
<div class="t" style="left:996px;top:753px;color:#e6e6e6;font-size:11px;line-height:13px;letter-spacing:0.35px;-webkit-text-stroke:0.25px #e6e6e6;">Start</div>
<div class="t" style="left:857px;width:200px;text-align:right;top:753px;color:#e6e6e6;font-size:11px;line-height:13px;letter-spacing:0.35px;-webkit-text-stroke:0.25px #e6e6e6;">1</div>
<div class="t" style="left:1085px;top:753px;color:#e6e6e6;font-size:11px;line-height:13px;letter-spacing:0.35px;-webkit-text-stroke:0.25px #e6e6e6;">End</div>
<div class="t" style="left:942px;width:200px;text-align:right;top:753px;color:#e6e6e6;font-size:11px;line-height:13px;letter-spacing:0.35px;-webkit-text-stroke:0.25px #e6e6e6;">250</div>
<div class="t" style="left:-61.5px;width:200px;text-align:center;top:778px;color:#c8c8c8;font-size:11px;line-height:13px;letter-spacing:0.35px;-webkit-text-stroke:0.25px #c8c8c8;">0</div>
<div class="t" style="left:24.939999999999998px;width:200px;text-align:center;top:778px;color:#c8c8c8;font-size:11px;line-height:13px;letter-spacing:0.35px;-webkit-text-stroke:0.25px #c8c8c8;">20</div>
<div class="t" style="left:111.38px;width:200px;text-align:center;top:778px;color:#c8c8c8;font-size:11px;line-height:13px;letter-spacing:0.35px;-webkit-text-stroke:0.25px #c8c8c8;">40</div>
<div class="t" style="left:197.82px;width:200px;text-align:center;top:778px;color:#c8c8c8;font-size:11px;line-height:13px;letter-spacing:0.35px;-webkit-text-stroke:0.25px #c8c8c8;">60</div>
<div class="t" style="left:284.26px;width:200px;text-align:center;top:778px;color:#c8c8c8;font-size:11px;line-height:13px;letter-spacing:0.35px;-webkit-text-stroke:0.25px #c8c8c8;">80</div>
<div class="t" style="left:370.7px;width:200px;text-align:center;top:778px;color:#c8c8c8;font-size:11px;line-height:13px;letter-spacing:0.35px;-webkit-text-stroke:0.25px #c8c8c8;">100</div>
<div class="t" style="left:457.14px;width:200px;text-align:center;top:778px;color:#c8c8c8;font-size:11px;line-height:13px;letter-spacing:0.35px;-webkit-text-stroke:0.25px #c8c8c8;">120</div>
<div class="t" style="left:543.58px;width:200px;text-align:center;top:778px;color:#c8c8c8;font-size:11px;line-height:13px;letter-spacing:0.35px;-webkit-text-stroke:0.25px #c8c8c8;">140</div>
<div class="t" style="left:630.02px;width:200px;text-align:center;top:778px;color:#c8c8c8;font-size:11px;line-height:13px;letter-spacing:0.35px;-webkit-text-stroke:0.25px #c8c8c8;">160</div>
<div class="t" style="left:716.46px;width:200px;text-align:center;top:778px;color:#c8c8c8;font-size:11px;line-height:13px;letter-spacing:0.35px;-webkit-text-stroke:0.25px #c8c8c8;">180</div>
<div class="t" style="left:802.9px;width:200px;text-align:center;top:778px;color:#c8c8c8;font-size:11px;line-height:13px;letter-spacing:0.35px;-webkit-text-stroke:0.25px #c8c8c8;">200</div>
<div class="t" style="left:889.34px;width:200px;text-align:center;top:778px;color:#c8c8c8;font-size:11px;line-height:13px;letter-spacing:0.35px;-webkit-text-stroke:0.25px #c8c8c8;">220</div>
<div class="t" style="left:975.78px;width:200px;text-align:center;top:778px;color:#c8c8c8;font-size:11px;line-height:13px;letter-spacing:0.35px;-webkit-text-stroke:0.25px #c8c8c8;">240</div>
<div class="a" style="left:9px;top:794px;width:1148px;height:9px;background:#555555;border-radius:4px;"></div>
<svg style="left:0px;top:0px" width="1439" height="831" viewBox="0 0 1439 831"><circle cx="20" cy="759.5" r="6" fill="#e6e6e6"/><path d="M21.5 755.5 L18.5 759.5 L21.5 763.5" stroke="#303030" stroke-width="1.6" fill="none"/><path d="M30.5 758.25 L34 761.75 L37.5 758.25" stroke="#e6e6e6" stroke-width="1.3" fill="none" stroke-linecap="round" stroke-linejoin="round"/><path d="M106.5 758.25 L110 761.75 L113.5 758.25" stroke="#e6e6e6" stroke-width="1.3" fill="none" stroke-linecap="round" stroke-linejoin="round"/><path d="M167.5 758.25 L171 761.75 L174.5 758.25" stroke="#e6e6e6" stroke-width="1.3" fill="none" stroke-linecap="round" stroke-linejoin="round"/><circle cx="499" cy="760" r="4.8" fill="none" stroke="#bdbdbd" stroke-width="1"/><path d="M515 758.5 L518 761.5 L521 758.5" stroke="#555" stroke-width="1" fill="none" stroke-linecap="round" stroke-linejoin="round"/><g fill="#e6e6e6"><rect x="540" y="755" width="1.8" height="10"/><path d="M549.5 755 V765 L543.5 760 Z"/><path d="M555.5 760 L559.5 755.5 L563.5 760 L559.5 764.5 Z M571 755 V765 L565 760 Z"/><path d="M588.5 754.5 V765.5 L580 760 Z"/><path d="M599 754.5 V765.5 L607.5 760 Z"/><path d="M616.5 755 V765 L622.5 760 Z M623.5 760 L627.5 755.5 L631.5 760 L627.5 764.5 Z"/><path d="M640 755 V765 L646 760 Z"/><rect x="647" y="755" width="1.8" height="10"/></g><circle cx="971.5" cy="761.5" r="5.2" fill="none" stroke="#e6e6e6" stroke-width="1.1"/><path d="M971.5 758.5 V761.5 H974 M969.5 754.5 H973.5 M975.5 756 L977 754.5" stroke="#e6e6e6" stroke-width="1" fill="none"/><circle cx="13.5" cy="798" r="3.2" fill="#2e2e2e"/><circle cx="1150.5" cy="798" r="3.2" fill="#2e2e2e"/><g stroke="#3a3a3a" stroke-width="1"><line x1="39.0" y1="802" x2="39.0" y2="805"/><line x1="82.2" y1="802" x2="82.2" y2="805"/><line x1="125.4" y1="802" x2="125.4" y2="805"/><line x1="168.7" y1="802" x2="168.7" y2="805"/><line x1="211.9" y1="802" x2="211.9" y2="805"/><line x1="255.1" y1="802" x2="255.1" y2="805"/><line x1="298.3" y1="802" x2="298.3" y2="805"/><line x1="341.5" y1="802" x2="341.5" y2="805"/><line x1="384.8" y1="802" x2="384.8" y2="805"/><line x1="428.0" y1="802" x2="428.0" y2="805"/><line x1="471.2" y1="802" x2="471.2" y2="805"/><line x1="514.4" y1="802" x2="514.4" y2="805"/><line x1="557.6" y1="802" x2="557.6" y2="805"/><line x1="600.9" y1="802" x2="600.9" y2="805"/><line x1="644.1" y1="802" x2="644.1" y2="805"/><line x1="687.3" y1="802" x2="687.3" y2="805"/><line x1="730.5" y1="802" x2="730.5" y2="805"/><line x1="773.7" y1="802" x2="773.7" y2="805"/><line x1="817.0" y1="802" x2="817.0" y2="805"/><line x1="860.2" y1="802" x2="860.2" y2="805"/><line x1="903.4" y1="802" x2="903.4" y2="805"/><line x1="946.6" y1="802" x2="946.6" y2="805"/><line x1="989.8" y1="802" x2="989.8" y2="805"/><line x1="1033.1" y1="802" x2="1033.1" y2="805"/><line x1="1076.3" y1="802" x2="1076.3" y2="805"/><line x1="1119.5" y1="802" x2="1119.5" y2="805"/></g><path d="M2 787 L6 791 L2 795" stroke="#8a8a8a" stroke-width="1" fill="none"/><path d="M1162 791 L1158 795 L1162 799" stroke="#8a8a8a" stroke-width="1" fill="none"/><rect x="1158" y="782" width="2" height="22" fill="#2a2a2a"/><line x1="661.5" y1="790" x2="661.5" y2="805" stroke="#4772b3" stroke-width="1.5"/></svg>
<div class="a" style="left:647px;top:775px;width:29px;height:17px;background:#4772b3;border-radius:4px;"></div>
<div class="t" style="left:561.5px;width:200px;text-align:center;top:777px;color:#ffffff;font-size:11px;line-height:13px;letter-spacing:0.35px;-webkit-text-stroke:0.25px #ffffff;">144</div>
<svg style="left:0px;top:0px" width="1439" height="831" viewBox="0 0 1439 831"><rect x="10.5" y="809.5" width="10" height="14" rx="3" fill="none" stroke="#a0a0a0" stroke-width="1"/><path d="M11 815 V812.5 A3 3 0 0 1 14 810 H15 V815 Z" fill="#a0a0a0"/><rect x="68.5" y="809.5" width="10" height="14" rx="3" fill="none" stroke="#a0a0a0" stroke-width="1"/><rect x="72" y="811.5" width="3" height="5" rx="1" fill="#a0a0a0"/><rect x="157.5" y="809.5" width="10" height="14" rx="3" fill="none" stroke="#a0a0a0" stroke-width="1"/><path d="M167 815 V812.5 A3 3 0 0 0 164 810 H163 V815 Z" fill="#a0a0a0"/><g stroke="#8a8a8a" stroke-width="1" fill="none"><circle cx="1382" cy="817" r="5.5"/><ellipse cx="1382" cy="817" rx="2.5" ry="5.5"/><path d="M1376.5 817 H1387.5 M1377.5 814 H1386.5 M1377.5 820 H1386.5 M1376 811 L1388 823"/></g><rect x="1397" y="810" width="1.2" height="14" fill="#8a8a8a"/></svg>
<div class="t" style="left:26px;top:810px;color:#a8a8a8;font-size:11px;line-height:13px;letter-spacing:0.35px;-webkit-text-stroke:0.25px #a8a8a8;">Select</div>
<div class="t" style="left:84px;top:810px;color:#a8a8a8;font-size:11px;line-height:13px;letter-spacing:0.35px;-webkit-text-stroke:0.25px #a8a8a8;">Rotate View</div>
<div class="t" style="left:173px;top:810px;color:#a8a8a8;font-size:11px;line-height:13px;letter-spacing:0.35px;-webkit-text-stroke:0.25px #a8a8a8;">Object</div>
<div class="t" style="left:1404px;top:810px;color:#a8a8a8;font-size:11px;line-height:13px;letter-spacing:0.35px;-webkit-text-stroke:0.25px #a8a8a8;">4.3.2</div>
<div class="a" style="left:0px;top:829px;width:1439px;height:1px;background:#2a2a2a;border-radius:0;"></div>
<div class="a" style="left:1px;top:26px;width:1162px;height:718px;border-radius:6px;border:1px solid rgba(255,255,255,0.09)"></div>
<div class="a" style="left:1166px;top:26px;width:273px;height:247px;border-radius:6px;border:1px solid rgba(255,255,255,0.09)"></div>
<div class="a" style="left:1166px;top:277px;width:273px;height:528px;border-radius:6px;border:1px solid rgba(255,255,255,0.09)"></div>
<div class="a" style="left:1px;top:747px;width:1162px;height:58px;border-radius:6px;border:1px solid rgba(255,255,255,0.09)"></div>
</body></html>
